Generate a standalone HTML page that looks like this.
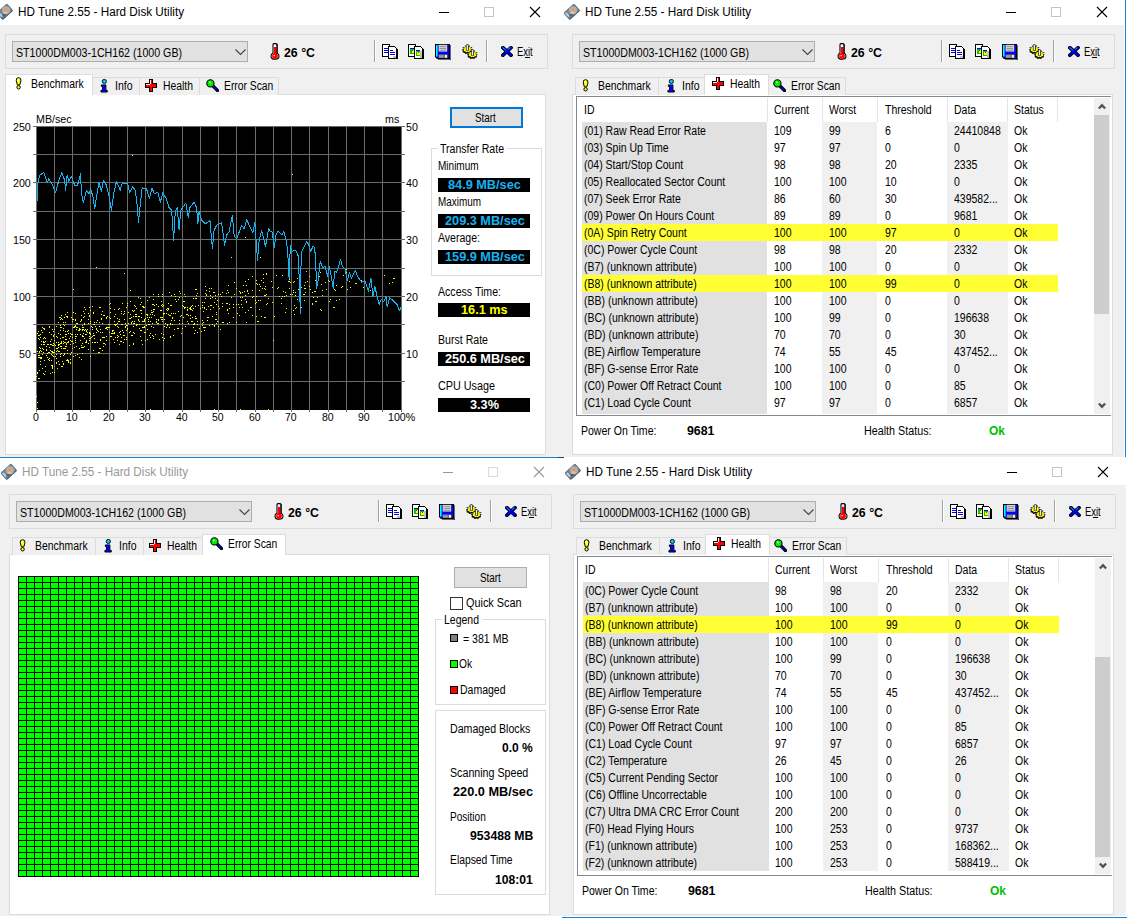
<!DOCTYPE html>
<html lang="en"><head><meta charset="utf-8"><title>HD Tune 2.55 - Hard Disk Utility</title>
<style>
html,body{margin:0;padding:0}
body{width:1127px;height:918px;position:relative;overflow:hidden;background:#f0f0f0;font-family:"Liberation Sans",sans-serif;color:#000}
.w{position:absolute;width:0;height:0}
.b{position:absolute;display:block}
.t{position:absolute;white-space:nowrap;transform-origin:0 50%}
</style></head>
<body>
<div class="b" style="left:0px;top:0px;width:1127px;height:25px;background:#fff;"></div>
<div class="b" style="left:0px;top:457px;width:1127px;height:28px;background:#fff;"></div>
<div class="b" style="left:0px;top:457px;width:558px;height:1px;background:#1883d7;"></div>
<div class="b" style="left:558px;top:457px;width:6px;height:1px;background:#3a3a3a;"></div>
<div class="b" style="left:1124px;top:25px;width:1px;height:432px;background:#fff;"></div>
<div class="b" style="left:1125px;top:0px;width:1px;height:457px;background:#1883d7;"></div>
<div class="b" style="left:1126px;top:0px;width:1px;height:918px;background:#fff;"></div>
<div class="b" style="left:0px;top:916px;width:1127px;height:2px;background:#fff;"></div>
<div class="b" style="left:562px;top:917px;width:565px;height:1px;background:#1883d7;"></div>
<div class="w" style="left:0px;top:0px">
<svg class="b" style="left:-2.9px;top:4.1px" width="16.2" height="16.2" viewBox="0 0 18 18"><g transform="rotate(-42 8.6 8.6)"><rect x="0.6" y="3.6" width="16" height="10.4" rx="1.6" fill="#3f566c"/><rect x="0.9" y="3.3" width="15.4" height="9.6" rx="1.5" fill="#6d8599"/><rect x="1.6" y="5" width="2.4" height="5.6" rx="1" fill="#c3ccd4"/><rect x="4.2" y="9.4" width="4.2" height="2.6" fill="#4c5f70"/></g><circle cx="10" cy="6.9" r="4.5" fill="#c4a994"/><ellipse cx="9.4" cy="9.6" rx="2.4" ry="1.3" fill="#e3c0a6"/><circle cx="9.9" cy="6.6" r="1.1" fill="#b39c8b"/></svg>
<div class="t" style="left:18.00px;top:4px;font-size:12px;line-height:16px;transform:scaleX(0.9762);">HD Tune 2.55 - Hard Disk Utility</div>
<div class="b" style="left:439px;top:12px;width:10px;height:1px;background:#000;"></div>
<div class="b" style="left:484px;top:7px;width:10px;height:10px;border:1px solid #c4c4c4;box-sizing:border-box;"></div>
<svg class="b" style="left:529px;top:6px" width="12" height="12" viewBox="0 0 12 12"><path d="M1 1 L11 11 M11 1 L1 11" stroke="#000" stroke-width="1.1"/></svg>
<div class="b" style="left:5px;top:34px;width:543px;height:35px;border:1px solid #dcdcdc;box-sizing:border-box;"></div>
<div class="b" style="left:12px;top:41px;width:236px;height:21px;background:#e1e1e1;border:1px solid #adadad;box-sizing:border-box;"></div>
<div class="t" style="left:16.00px;top:45px;font-size:12px;line-height:16px;transform:scaleX(0.8857);">ST1000DM003-1CH162 (1000 GB)</div>
<svg class="b" style="left:235px;top:48.5px" width="11" height="7" viewBox="0 0 11 7"><path d="M0.5 0.5 L5.5 5.5 L10.5 0.5" fill="none" stroke="#404040" stroke-width="1.1"/></svg>
<svg class="b" style="left:270px;top:43px" width="10" height="17" viewBox="0 0 10 17"><path d="M3 1.5 Q3 0.6 4.5 0.6 L5.5 0.6 Q7 0.6 7 1.5 L7 10 Q9 11 9 13 Q9 16.3 5 16.3 Q1 16.3 1 13 Q1 11 3 10 Z" fill="#fff" stroke="#000" stroke-width="1.1"/><rect x="4" y="4" width="2.6" height="8" fill="#f00"/><circle cx="5" cy="13" r="2.9" fill="#f00"/><rect x="3.6" y="12" width="1.2" height="1.2" fill="#fff"/><rect x="6.6" y="1" width="1" height="10" fill="#000"/></svg>
<div class="t" style="left:284.40px;top:44px;font-size:13px;line-height:17px;font-weight:bold;transform:scaleX(0.9492);">26 °C</div>
<div class="b" style="left:374px;top:40px;width:1px;height:22px;background:#a0a0a0;"></div>
<div class="b" style="left:375px;top:40px;width:1px;height:22px;background:#fff;"></div>
<svg class="b" style="left:382px;top:44px" width="16" height="16" viewBox="0 0 16 16" shape-rendering="crispEdges"><rect x="0.5" y="0.5" width="7" height="12" fill="#fff" stroke="#000"/><rect x="2" y="4" width="4" height="1" fill="#00f"/><rect x="2" y="6" width="4" height="1" fill="#00f"/><rect x="2" y="8" width="4" height="1" fill="#00f"/><rect x="8" y="14" width="8" height="1" fill="#000"/><rect x="15" y="5" width="1" height="10" fill="#000"/><polygon points="6.5,2.5 12.5,2.5 14.5,4.5 14.5,14.5 6.5,14.5" fill="#fff" stroke="#000"/><rect x="8" y="6" width="3" height="1" fill="#00f"/><rect x="8" y="8" width="5" height="1" fill="#00f"/><rect x="8" y="10" width="5" height="1" fill="#00f"/><rect x="11" y="12" width="3" height="2" fill="#c0c0c0"/></svg>
<svg class="b" style="left:408px;top:44px" width="16" height="16" viewBox="0 0 16 16" shape-rendering="crispEdges"><rect x="0.5" y="0.5" width="7" height="12" fill="#fff" stroke="#000"/><rect x="2" y="4" width="4" height="1" fill="#00f"/><rect x="2" y="5" width="4" height="5" fill="#0c0"/><rect x="4" y="6" width="2" height="3" fill="#ff0"/><rect x="4" y="6" width="1" height="1" fill="#f00"/><rect x="8" y="14" width="8" height="1" fill="#000"/><rect x="15" y="5" width="1" height="10" fill="#000"/><polygon points="6.5,2.5 12.5,2.5 14.5,4.5 14.5,14.5 6.5,14.5" fill="#fff" stroke="#000"/><rect x="8" y="6" width="4" height="1" fill="#00f"/><rect x="8" y="7" width="4" height="5" fill="#0c0"/><rect x="9" y="8" width="3" height="3" fill="#ff0"/><rect x="10" y="8" width="1" height="1" fill="#f00"/><rect x="12" y="7" width="2" height="7" fill="#c0c0c0"/></svg>
<svg class="b" style="left:435px;top:44px" width="16" height="16" viewBox="0 0 16 16"><path d="M0 0 H15 V15 H2 L0 13 Z" fill="#000"/><path d="M1 1 H14 V14 H2.4 L1 12.6 Z" fill="#0000ff"/><rect x="1" y="1" width="1.6" height="11.5" fill="#00ffff"/><rect x="3.6" y="0.8" width="8.6" height="6.8" fill="#d6d6d6"/><rect x="4.6" y="2.2" width="6.6" height="0.9" fill="#8c8c8c"/><rect x="4.6" y="4" width="6.6" height="0.9" fill="#8c8c8c"/><rect x="4.6" y="5.8" width="6.6" height="0.9" fill="#8c8c8c"/><rect x="3.6" y="10.4" width="9" height="3.6" fill="#6e6e6e"/><rect x="4" y="11.2" width="4.6" height="2.4" fill="#9a9a9a"/><rect x="10" y="11" width="1.9" height="2.8" fill="#f4f4f4"/><rect x="15" y="1" width="1" height="15" fill="#000" opacity="0.55"/><rect x="3" y="15" width="13" height="1" fill="#000" opacity="0.55"/></svg>
<svg class="b" style="left:462px;top:44px" width="17" height="17" viewBox="0 0 17 17"><polygon points="5.20,2.30 6.70,3.29 8.67,3.24 9.01,4.70 10.52,5.61 9.53,6.86 9.88,8.30 8.03,8.75 7.05,10.06 5.20,9.50 3.35,10.06 2.37,8.75 0.52,8.30 0.87,6.86 -0.12,5.61 1.39,4.70 1.73,3.24 3.70,3.29" fill="#000"/><polygon points="5.40,2.10 6.53,3.24 8.42,2.87 8.26,4.25 10.03,4.83 8.65,5.80 9.47,7.05 7.52,7.16 7.01,8.50 5.40,7.70 3.79,8.50 3.28,7.16 1.33,7.05 2.15,5.80 0.77,4.83 2.54,4.25 2.38,2.87 4.27,3.24" fill="#ffff00"/><rect x="0.66" y="3.10" width="1" height="1" fill="#000"/><rect x="2.83" y="1.64" width="1" height="1" fill="#000"/><rect x="6.97" y="1.64" width="1" height="1" fill="#000"/><rect x="9.14" y="3.10" width="1" height="1" fill="#000"/><path d="M4.30 1.20 l1.1 -1.2 l1.1 1.2 v5.2 h-2.2 z" fill="#c8c8d4" stroke="#000" stroke-width="0.7"/><rect x="4.80" y="1.40" width="0.8" height="5" fill="#fff"/><polygon points="10.30,7.30 11.80,8.29 13.77,8.24 14.11,9.70 15.62,10.61 14.63,11.86 14.98,13.30 13.13,13.75 12.15,15.06 10.30,14.50 8.45,15.06 7.47,13.75 5.62,13.30 5.97,11.86 4.98,10.61 6.49,9.70 6.83,8.24 8.80,8.29" fill="#000"/><polygon points="10.50,7.10 11.63,8.24 13.52,7.87 13.36,9.25 15.13,9.83 13.75,10.80 14.57,12.05 12.62,12.16 12.11,13.50 10.50,12.70 8.89,13.50 8.38,12.16 6.43,12.05 7.25,10.80 5.87,9.83 7.64,9.25 7.48,7.87 9.37,8.24" fill="#ffff00"/><rect x="5.76" y="8.10" width="1" height="1" fill="#000"/><rect x="7.93" y="6.64" width="1" height="1" fill="#000"/><rect x="12.07" y="6.64" width="1" height="1" fill="#000"/><rect x="14.24" y="8.10" width="1" height="1" fill="#000"/><path d="M9.40 6.20 l1.1 -1.2 l1.1 1.2 v5.2 h-2.2 z" fill="#c8c8d4" stroke="#000" stroke-width="0.7"/><rect x="9.90" y="6.40" width="0.8" height="5" fill="#fff"/></svg>
<div class="b" style="left:486px;top:40px;width:1px;height:22px;background:#a0a0a0;"></div>
<div class="b" style="left:487px;top:40px;width:1px;height:22px;background:#fff;"></div>
<svg class="b" style="left:500.5px;top:45.5px" width="12.2" height="11.3" viewBox="0 0 13 12"><path d="M2 1.8 L10.6 9.8 M10.6 1.8 L2 9.8" stroke="#000" stroke-width="3.9" stroke-linecap="square"/><path d="M2 1.8 L10.6 9.8 M10.6 1.8 L2 9.8" stroke="#0000ff" stroke-width="2" stroke-linecap="square"/><path d="M1.7 1.4 L5.2 4.7 M10 1.4 L7.6 3.7" stroke="#00e5ff" stroke-width="0.9"/></svg>
<div class="t" style="left:517.30px;top:44px;font-size:12px;line-height:16px;transform:scaleX(0.7848);">Exit</div>
<div class="b" style="left:525px;top:57px;width:5px;height:1px;background:#000;"></div>
<div class="b" style="left:5px;top:94px;width:541px;height:361px;background:#fff;border:1px solid #dcdcdc;box-sizing:border-box;"></div>
<div class="b" style="left:90.5px;top:77px;width:49px;height:18px;background:#f0f0f0;border:1px solid #dcdcdc;box-sizing:border-box;border-bottom:none;"></div>
<svg class="b" style="left:99.6px;top:79px" width="8.2" height="13.6" viewBox="0 0 9 15"><circle cx="4.8" cy="2.7" r="2.3" fill="#0cf" stroke="#000" stroke-width="1"/><path d="M1.5 6.5 L6.5 6.5 L6.5 12.5 L8 12.5 L8 14.4 L1 14.4 L1 12.5 L2.8 12.5 L2.8 8.3 L1.5 8.3 Z" fill="#00f" stroke="#000" stroke-width="1"/></svg>
<div class="t" style="left:114.50px;top:78px;font-size:12px;line-height:16px;transform:scaleX(0.8743);">Info</div>
<div class="b" style="left:138.5px;top:77px;width:61.5px;height:18px;background:#f0f0f0;border:1px solid #dcdcdc;box-sizing:border-box;border-bottom:none;"></div>
<svg class="b" style="left:145px;top:79px" width="12" height="13" viewBox="0 0 12 13" shape-rendering="crispEdges"><path d="M4.5 0.5 H7.5 V4.5 H11.5 V8.5 H7.5 V12.5 H4.5 V8.5 H0.5 V4.5 H4.5 Z" fill="#f00" stroke="#000" stroke-width="1"/><rect x="5" y="1" width="1" height="4" fill="#fff"/><rect x="1" y="5" width="4" height="1" fill="#fff"/></svg>
<div class="t" style="left:163.30px;top:78px;font-size:12px;line-height:16px;transform:scaleX(0.8649);">Health</div>
<div class="b" style="left:199px;top:77px;width:79.5px;height:18px;background:#f0f0f0;border:1px solid #dcdcdc;box-sizing:border-box;border-bottom:none;"></div>
<svg class="b" style="left:205.5px;top:78.5px" width="13" height="13" viewBox="0 0 13 13"><path d="M6.5 6.5 L11.5 11.5" stroke="#000" stroke-width="3.2" stroke-linecap="round"/><path d="M7 7 L11.3 11.3" stroke="#00c" stroke-width="1.3" stroke-linecap="round"/><circle cx="4.4" cy="4.4" r="3.6" fill="#0e0" stroke="#000" stroke-width="1.1"/><rect x="3" y="2.6" width="1.6" height="1.6" fill="#cfc"/></svg>
<div class="t" style="left:224.20px;top:78px;font-size:12px;line-height:16px;transform:scaleX(0.8596);">Error Scan</div>
<div class="b" style="left:5px;top:74px;width:88px;height:21px;background:#fff;border:1px solid #dcdcdc;box-sizing:border-box;border-bottom:none;"></div>
<svg class="b" style="left:15.1px;top:77px" width="7.2" height="12.8" viewBox="0 0 8 14"><path d="M4 0.6 Q7 0.6 6.6 4 L5.4 8.6 L2.6 8.6 L1.4 4 Q1 0.6 4 0.6 Z" fill="#ff0" stroke="#000" stroke-width="1.1"/><circle cx="4" cy="11.3" r="1.9" fill="#ff0" stroke="#000" stroke-width="1.1"/><rect x="3" y="2" width="1" height="3" fill="#fff"/></svg>
<div class="t" style="left:31.30px;top:76px;font-size:12px;line-height:16px;transform:scaleX(0.8667);">Benchmark</div>
<svg class="b" style="left:0;top:0" width="560" height="440" viewBox="0 0 560 440"><rect x="36" y="126" width="366" height="284" fill="#000"/><path d="M36.5 126 V412 M54.5 126 V412 M72.5 126 V412 M90.5 126 V412 M109.5 126 V412 M127.5 126 V412 M145.5 126 V412 M163.5 126 V412 M182.5 126 V412 M200.5 126 V412 M218.5 126 V412 M236.5 126 V412 M255.5 126 V412 M273.5 126 V412 M291.5 126 V412 M309.5 126 V412 M328.5 126 V412 M346.5 126 V412 M364.5 126 V412 M382.5 126 V412 M401.5 126 V412 M33 126.5 H405 M33 154.5 H405 M33 182.5 H405 M33 211.5 H405 M33 239.5 H405 M33 268.5 H405 M33 296.5 H405 M33 324.5 H405 M33 353.5 H405 M33 381.5 H405" stroke="#6c6c6c" stroke-width="1" fill="none" shape-rendering="crispEdges"/><path d="M53 356.5h1M58 347.5h1M40 350.5h1M38 378.5h1M60 330.5h1M44 337.5h1M68 342.5h1M54 372.5h1M63 328.5h1M65 346.5h2M68 341.5h1M73 327.5h1M47 357.5h1M41 330.5h1M43 341.5h1M42 332.5h1M45 371.5h1M70 344.5h1M40 337.5h1M65 322.5h1M58 342.5h1M72 348.5h1M42 368.5h1M44 374.5h1M72 341.5h1M41 358.5h1M46 355.5h1M43 328.5h1M57 350.5h1M71 317.5h1M39 352.5h1M50 373.5h1M62 319.5h1M70 362.5h1M60 343.5h2M39 370.5h1M63 363.5h1M62 361.5h1M66 343.5h1M51 339.5h1M74 347.5h1M64 348.5h1M65 342.5h1M63 355.5h1M37 351.5h1M70 333.5h1M49 332.5h1M67 359.5h1M58 333.5h1M68 362.5h1M43 338.5h1M60 346.5h2M53 343.5h1M63 343.5h1M42 348.5h1M42 354.5h1M61 366.5h1M44 329.5h1M63 330.5h1M56 358.5h1M66 316.5h2M64 342.5h1M51 365.5h2M54 329.5h1M67 350.5h1M70 363.5h1M66 360.5h1M40 361.5h1M38 331.5h1M43 349.5h1M56 363.5h1M72 337.5h1M56 354.5h1M68 330.5h1M70 359.5h1M58 344.5h1M38 355.5h1M66 344.5h1M57 368.5h1M54 352.5h1M54 340.5h1M42 327.5h1M45 341.5h1M60 338.5h1M46 349.5h1M52 329.5h1M60 354.5h1M45 366.5h1M48 352.5h2M70 336.5h1M40 348.5h1M41 344.5h1M62 366.5h1M55 345.5h1M44 328.5h1M56 326.5h1M68 361.5h1M39 351.5h1M49 347.5h1M37 372.5h1M54 340.5h1M43 349.5h1M63 348.5h1M59 364.5h1M71 352.5h1M52 367.5h1M65 334.5h1M39 339.5h1M60 327.5h2M61 348.5h1M51 354.5h1M65 314.5h1M64 325.5h1M51 351.5h1M56 348.5h2M60 319.5h1M65 342.5h1M43 342.5h2M52 345.5h1M61 342.5h1M37 333.5h1M51 360.5h1M73 312.5h1M53 352.5h1M71 334.5h2M67 317.5h1M54 334.5h1M53 343.5h1M58 351.5h2M72 321.5h1M70 344.5h1M47 353.5h1M60 325.5h1M73 356.5h1M39 355.5h1M57 337.5h1M60 334.5h1M64 317.5h1M67 353.5h1M52 351.5h1M73 343.5h1M53 345.5h1M40 357.5h1M65 336.5h1M48 359.5h1M42 354.5h1M63 364.5h1M53 335.5h1M52 368.5h1M50 341.5h1M44 360.5h1M58 361.5h1M38 357.5h2M61 318.5h1M66 334.5h1M40 334.5h1M61 341.5h1M65 348.5h1M55 356.5h1M52 355.5h1M67 360.5h2M60 356.5h1M52 366.5h1M43 344.5h2M39 347.5h1M43 352.5h1M38 338.5h1M63 324.5h1M43 341.5h1M67 342.5h1M49 360.5h1M39 370.5h1M56 351.5h1M46 346.5h1M63 322.5h1M49 358.5h1M74 326.5h1M37 373.5h1M40 348.5h1M54 350.5h1M48 344.5h1M40 337.5h1M56 348.5h1M40 358.5h1M62 337.5h2M67 312.5h1M63 341.5h1M73 319.5h1M47 344.5h1M51 334.5h1M64 354.5h1M49 326.5h1M40 364.5h1M52 352.5h1M45 338.5h1M71 341.5h1M67 331.5h1M52 372.5h1M61 315.5h1M49 327.5h1M56 362.5h1M43 373.5h1M50 344.5h2M56 362.5h1M72 319.5h1M46 350.5h1M50 350.5h1M70 340.5h1M70 354.5h1M41 341.5h1M46 350.5h1M40 357.5h2M61 353.5h1M59 317.5h1M54 344.5h1M56 342.5h1M38 335.5h2M59 344.5h1M65 339.5h2M68 333.5h1M58 345.5h1M53 336.5h1M64 353.5h1M65 331.5h1M53 331.5h1M56 336.5h1M39 378.5h1M69 338.5h1M58 322.5h1M41 351.5h1M86 331.5h1M90 321.5h1M110 336.5h2M93 335.5h1M82 325.5h1M81 359.5h1M99 326.5h1M103 346.5h1M79 357.5h1M77 334.5h1M81 345.5h1M100 332.5h1M86 340.5h1M100 339.5h1M95 326.5h1M106 327.5h1M85 334.5h2M75 338.5h1M94 335.5h1M100 329.5h1M108 327.5h2M81 315.5h1M83 347.5h1M83 327.5h1M75 342.5h1M81 320.5h1M92 327.5h1M97 330.5h1M86 330.5h1M84 330.5h1M84 346.5h1M76 323.5h2M75 355.5h1M92 306.5h1M110 318.5h1M77 354.5h1M83 327.5h1M111 333.5h1M75 326.5h1M102 332.5h1M92 336.5h1M82 325.5h1M82 327.5h1M114 342.5h1M89 332.5h1M75 325.5h1M103 315.5h2M88 343.5h1M75 320.5h1M87 332.5h1M90 310.5h1M75 334.5h1M102 337.5h1M82 336.5h1M109 317.5h1M75 340.5h1M113 339.5h1M102 350.5h1M83 311.5h1M90 323.5h1M85 329.5h1M101 314.5h1M80 340.5h1M75 319.5h1M76 336.5h1M84 338.5h1M84 316.5h1M99 322.5h1M112 331.5h1M90 333.5h1M89 307.5h1M94 338.5h1M82 330.5h1M96 322.5h1M96 332.5h1M113 330.5h1M103 337.5h2M107 329.5h1M89 338.5h1M84 324.5h1M76 329.5h1M92 329.5h1M109 304.5h1M94 324.5h1M84 323.5h1M104 343.5h1M91 337.5h1M106 328.5h1M81 347.5h2M79 329.5h1M90 356.5h1M102 311.5h1M114 309.5h1M93 333.5h1M85 342.5h2M89 333.5h1M80 334.5h1M93 313.5h1M80 321.5h1M93 312.5h1M110 308.5h1M114 333.5h1M106 317.5h1M99 348.5h2M92 342.5h1M75 313.5h1M104 315.5h1M112 333.5h1M103 343.5h1M113 333.5h1M84 307.5h1M83 333.5h1M88 323.5h1M110 312.5h1M82 335.5h1M81 319.5h1M74 327.5h1M112 330.5h1M78 330.5h2M83 329.5h1M101 319.5h1M88 313.5h1M89 316.5h1M109 332.5h1M97 342.5h1M101 318.5h1M97 320.5h1M98 331.5h1M114 316.5h1M114 324.5h2M94 342.5h2M107 327.5h2M76 346.5h1M106 336.5h1M85 309.5h1M105 328.5h1M105 344.5h1M89 315.5h1M107 316.5h1M99 307.5h2M82 353.5h1M82 329.5h1M87 329.5h1M102 323.5h1M79 348.5h1M82 343.5h1M88 319.5h1M91 326.5h1M94 322.5h1M83 336.5h1M108 324.5h2M89 336.5h1M76 327.5h2M86 341.5h1M90 334.5h1M88 349.5h1M96 329.5h1M89 340.5h1M110 303.5h1M93 324.5h1M98 352.5h2M90 338.5h1M114 321.5h1M83 317.5h1M80 329.5h1M100 340.5h1M106 340.5h1M93 350.5h1M75 336.5h1M106 318.5h1M79 328.5h1M84 313.5h1M96 328.5h1M80 334.5h1M98 352.5h1M115 337.5h1M122 303.5h1M163 334.5h1M135 306.5h1M131 335.5h2M143 327.5h1M152 314.5h1M132 310.5h1M117 323.5h1M119 319.5h1M152 304.5h2M114 332.5h1M133 326.5h1M139 316.5h1M127 328.5h1M135 316.5h2M156 321.5h1M147 315.5h1M142 327.5h1M162 321.5h1M152 335.5h1M118 321.5h1M133 311.5h1M151 317.5h1M142 306.5h2M143 306.5h1M141 302.5h1M138 316.5h1M161 319.5h1M119 308.5h1M124 311.5h1M141 330.5h1M144 327.5h1M126 330.5h1M117 318.5h1M136 324.5h2M160 310.5h1M119 321.5h1M143 307.5h2M153 299.5h1M125 326.5h1M153 338.5h1M133 332.5h1M158 306.5h1M115 314.5h1M121 313.5h1M140 304.5h1M158 320.5h1M141 340.5h1M127 329.5h1M126 325.5h2M140 310.5h2M120 331.5h1M160 310.5h2M130 301.5h1M117 337.5h1M158 319.5h1M141 317.5h1M124 319.5h1M118 336.5h1M121 324.5h2M164 338.5h1M162 319.5h1M145 340.5h1M140 298.5h1M158 294.5h1M156 319.5h1M153 294.5h1M155 334.5h1M131 317.5h1M144 320.5h1M126 307.5h1M127 325.5h1M147 314.5h1M123 314.5h1M148 321.5h1M153 309.5h2M133 343.5h1M121 337.5h1M154 315.5h1M138 297.5h1M133 323.5h1M159 339.5h1M161 333.5h1M121 341.5h1M162 304.5h1M162 306.5h1M130 314.5h1M143 321.5h2M118 309.5h1M161 305.5h1M129 345.5h1M145 318.5h1M162 294.5h1M134 305.5h1M125 323.5h1M147 300.5h1M116 324.5h1M146 325.5h1M135 316.5h1M126 339.5h1M122 330.5h1M151 312.5h2M128 323.5h1M139 321.5h1M114 321.5h1M138 320.5h1M163 305.5h1M126 337.5h1M160 317.5h2M139 324.5h1M131 323.5h1M164 326.5h1M150 333.5h1M156 322.5h1M140 330.5h1M162 296.5h1M120 341.5h1M123 335.5h2M146 314.5h1M153 336.5h1M162 317.5h1M132 321.5h1M147 329.5h1M130 318.5h1M162 337.5h1M163 340.5h1M131 322.5h1M158 323.5h1M124 313.5h1M117 335.5h1M135 314.5h2M120 334.5h1M147 339.5h1M142 321.5h1M153 311.5h1M151 310.5h1M147 317.5h1M119 344.5h1M118 327.5h1M136 325.5h1M149 297.5h1M121 311.5h1M134 323.5h1M139 328.5h1M130 331.5h1M134 310.5h1M150 314.5h1M130 318.5h1M153 327.5h1M133 344.5h1M134 333.5h1M151 326.5h1M136 308.5h1M141 313.5h1M115 325.5h1M125 327.5h1M117 340.5h1M144 332.5h1M144 326.5h1M164 319.5h1M162 319.5h1M123 342.5h1M129 318.5h1M145 332.5h1M163 313.5h1M149 335.5h1M128 312.5h1M148 324.5h2M127 303.5h1M152 323.5h1M156 304.5h1M150 321.5h1M130 331.5h1M164 313.5h1M163 314.5h1M161 301.5h1M150 337.5h1M133 316.5h1M117 326.5h1M119 332.5h1M158 296.5h1M123 332.5h1M138 319.5h1M127 305.5h1M144 319.5h1M140 336.5h1M148 319.5h1M134 321.5h1M154 305.5h1M129 332.5h1M124 339.5h1M149 317.5h1M142 344.5h1M157 323.5h1M191 321.5h2M169 292.5h1M184 294.5h1M212 316.5h1M174 329.5h1M187 310.5h1M166 313.5h1M203 322.5h1M197 324.5h1M168 314.5h1M166 327.5h1M178 299.5h1M196 289.5h1M184 301.5h1M174 320.5h1M211 288.5h1M177 328.5h2M198 305.5h1M190 309.5h1M167 325.5h1M172 317.5h1M190 315.5h1M174 294.5h1M167 324.5h1M202 320.5h1M206 290.5h1M209 288.5h1M195 289.5h1M179 297.5h1M173 313.5h1M193 308.5h1M196 295.5h1M194 323.5h1M184 307.5h1M210 298.5h1M204 330.5h1M185 326.5h1M214 325.5h1M195 330.5h1M209 325.5h1M213 307.5h1M204 307.5h1M195 318.5h2M178 311.5h1M175 299.5h1M165 323.5h1M168 303.5h1M201 331.5h1M181 315.5h1M199 328.5h1M196 298.5h1M202 325.5h1M170 323.5h1M192 305.5h1M197 293.5h1M168 309.5h1M182 323.5h1M193 324.5h2M179 320.5h1M166 313.5h1M191 306.5h1M215 298.5h1M190 307.5h1M189 308.5h2M167 310.5h1M172 324.5h1M180 316.5h1M209 291.5h1M202 307.5h1M195 318.5h1M204 302.5h1M210 295.5h1M195 316.5h1M197 332.5h1M181 333.5h1M167 308.5h2M208 306.5h1M202 302.5h1M200 308.5h1M170 324.5h1M183 317.5h1M171 320.5h1M203 327.5h2M185 307.5h1M183 306.5h1M207 317.5h1M184 301.5h1M170 336.5h1M184 308.5h1M169 315.5h1M183 301.5h1M179 291.5h1M205 293.5h1M205 286.5h1M195 298.5h1M214 326.5h1M171 295.5h1M170 305.5h2M194 333.5h1M197 321.5h1M192 317.5h1M193 327.5h1M172 318.5h1M187 309.5h1M182 328.5h1M192 310.5h1M203 311.5h1M175 313.5h1M172 318.5h1M214 302.5h1M206 294.5h1M206 295.5h1M173 335.5h1M171 313.5h1M204 308.5h1M188 323.5h1M193 298.5h1M167 325.5h1M167 308.5h1M195 306.5h1M170 315.5h1M205 298.5h1M202 305.5h1M205 327.5h1M213 292.5h2M175 296.5h1M187 321.5h1M210 309.5h1M179 323.5h1M206 309.5h1M176 301.5h1M185 296.5h1M182 305.5h1M180 293.5h1M166 309.5h1M191 309.5h1M190 318.5h1M207 320.5h1M188 315.5h1M208 317.5h1M210 305.5h2M173 313.5h1M202 307.5h1M202 323.5h1M169 327.5h1M212 297.5h1M170 337.5h1M187 307.5h1M186 314.5h2M212 324.5h1M227 310.5h1M266 273.5h1M252 276.5h1M227 323.5h1M220 329.5h1M239 315.5h1M229 304.5h1M222 292.5h1M264 317.5h1M258 300.5h1M252 315.5h1M218 306.5h1M266 304.5h1M234 282.5h1M252 297.5h1M238 304.5h1M215 295.5h1M236 322.5h1M216 312.5h1M246 285.5h1M218 326.5h1M246 322.5h1M265 286.5h1M259 290.5h1M257 321.5h1M258 321.5h1M261 280.5h1M266 294.5h1M231 297.5h1M256 302.5h1M227 309.5h1M240 297.5h1M233 317.5h1M245 312.5h1M222 322.5h2M255 303.5h1M222 306.5h1M265 289.5h1M226 303.5h1M261 316.5h1M228 285.5h1M219 308.5h1M242 297.5h1M257 284.5h1M217 321.5h1M252 290.5h1M245 295.5h1M260 300.5h1M215 319.5h2M245 281.5h1M247 290.5h1M226 293.5h1M234 294.5h1M242 292.5h1M218 294.5h1M257 284.5h1M264 317.5h1M218 306.5h1M217 300.5h1M233 304.5h1M220 294.5h1M228 292.5h1M255 300.5h1M263 282.5h1M240 293.5h1M236 304.5h1M260 300.5h1M263 274.5h1M256 296.5h1M248 293.5h1M256 280.5h1M222 303.5h1M256 316.5h1M256 283.5h1M239 291.5h1M259 309.5h1M262 288.5h1M264 288.5h1M239 307.5h1M259 284.5h1M244 291.5h1M221 296.5h1M246 302.5h1M229 308.5h1M247 291.5h1M263 278.5h1M236 288.5h1M216 323.5h1M216 304.5h1M253 296.5h1M228 313.5h1M233 307.5h1M248 279.5h1M227 303.5h1M229 322.5h1M265 317.5h1M245 299.5h1M248 310.5h1M216 314.5h1M241 304.5h1M243 285.5h1M260 286.5h1M241 300.5h1M227 290.5h1M242 307.5h1M240 292.5h1M250 307.5h2M246 301.5h1M237 313.5h1M264 295.5h2M306 271.5h1M312 304.5h1M313 297.5h1M309 286.5h1M293 292.5h1M299 293.5h1M312 303.5h1M321 310.5h1M307 281.5h1M322 290.5h1M317 297.5h1M283 291.5h1M297 278.5h1M293 282.5h1M296 307.5h1M329 281.5h1M294 281.5h1M283 291.5h1M303 294.5h2M314 291.5h1M318 273.5h1M320 272.5h1M286 308.5h1M304 300.5h1M290 294.5h1M279 296.5h1M272 287.5h1M281 298.5h1M330 299.5h1M277 288.5h1M271 281.5h1M295 308.5h1M294 305.5h1M282 275.5h1M298 289.5h2M294 314.5h1M315 280.5h1M325 282.5h1M289 288.5h1M299 292.5h1M282 296.5h1M316 282.5h1M285 292.5h1M276 275.5h1M274 316.5h1M267 303.5h1M315 291.5h1M281 303.5h1M278 287.5h1M295 295.5h1M292 294.5h1M329 301.5h1M301 287.5h1M305 292.5h1M285 312.5h1M286 295.5h1M315 301.5h2M295 292.5h1M293 290.5h1M284 296.5h1M328 280.5h1M322 295.5h1M319 276.5h1M272 302.5h1M309 276.5h1M304 288.5h2M312 292.5h1M301 307.5h1M326 289.5h1M321 284.5h1M289 279.5h1M268 298.5h1M305 282.5h1M288 281.5h2M310 289.5h1M290 282.5h1M272 287.5h1M293 310.5h1M320 309.5h1M304 285.5h1M266 274.5h1M297 299.5h1M355 283.5h2M347 289.5h1M339 299.5h1M342 286.5h1M355 270.5h1M337 270.5h1M358 278.5h1M335 290.5h1M349 281.5h1M361 280.5h1M333 307.5h2M350 287.5h1M336 285.5h1M332 286.5h1M341 287.5h1M345 269.5h2M363 287.5h1M334 289.5h1M343 275.5h1M346 272.5h1M336 300.5h1M359 278.5h1M393 278.5h1M392 282.5h1M370 290.5h1M384 275.5h1M394 278.5h1M389 283.5h1M96 267.5h1M124 273.5h1M73 289.5h1M130 290.5h1M231 257.5h1M132 155.5h1M60 317.5h1M273 340.5h1M245 237.5h1M260 257.5h1M292 174.5h1M36 396.5h1M37 402.5h1M37 408.5h1M36 376.5h1M150 409.5h1M214 409.5h1M268 409.5h1M240 409.5h1" stroke="#ffff00" stroke-width="1" fill="none" shape-rendering="crispEdges"/><polyline points="37.1,201.4 37.6,185.1 39.6,175.1 43.8,172.6 47.1,182.6 48.8,178.9 52.6,185.1 55.6,192.7 58.9,180.1 61.9,172.6 64.6,180.1 65.6,190.2 67.1,175.1 68.9,181.4 71.4,176.4 74.6,185.1 77.6,185.1 80.6,173.9 81.4,192.7 83.4,202.7 86.4,190.2 88.9,193.9 90.7,188.9 93.2,197.7 94.7,208.9 96.4,197.7 98.9,182.6 101.4,191.4 103.4,180.6 106.4,185.1 108.9,195.2 111.4,210.2 113.9,192.7 116.5,181.4 120.2,190.2 122.0,183.9 127.7,183.9 129.7,192.7 132.7,186.4 135.2,190.2 137.2,205.2 138.5,222.7 140.2,205.2 142.2,187.7 146.5,188.9 149.5,198.2 152.0,188.2 154.5,193.9 157.8,192.2 160.3,202.2 162.8,192.7 166.5,198.9 169.0,207.7 171.6,210.2 173.6,240.2 175.3,211.4 177.3,207.7 179.1,230.2 180.8,210.2 185.8,203.2 188.3,217.7 189.8,207.7 194.1,202.2 196.6,207.7 197.8,224.0 199.1,211.4 201.6,220.2 205.4,224.0 209.9,220.2 212.4,248.3 214.1,230.2 216.6,225.2 221.6,222.7 224.6,245.3 226.6,235.2 229.2,231.5 232.4,215.2 234.2,236.5 236.7,239.0 241.7,225.2 244.2,229.0 246.7,219.7 250.4,227.7 252.9,232.7 254.9,222.7 257.5,260.3 259.2,240.2 261.7,230.2 265.5,246.5 268.5,229.0 270.0,231.0 272.0,231.5 274.4,247.2 275.9,234.9 278.3,231.2 281.8,234.9 283.7,231.5 285.7,237.8 287.6,249.6 289.1,279.0 290.3,245.7 292.1,251.1 296.0,250.6 298.4,256.5 300.4,313.3 301.2,252.5 303.8,247.6 306.8,241.3 308.7,244.7 310.7,251.1 313.1,246.2 314.6,247.6 315.6,259.4 316.6,288.3 318.0,281.0 320.2,261.4 322.5,267.3 325.4,266.8 327.4,276.1 329.3,266.8 331.3,276.1 333.2,288.3 334.7,271.2 336.7,272.2 340.6,259.4 342.5,266.8 345.0,269.2 347.5,280.5 349.4,272.2 351.3,278.2 355.2,270.3 357.8,276.9 361.7,282.1 365.1,280.8 368.3,291.3 370.9,278.2 373.0,296.5 374.8,286.0 377.4,297.8 379.2,304.3 381.3,299.1 383.9,301.7 386.0,296.5 387.1,306.9 389.7,297.8 393.1,300.4 397.0,304.3 399.6,310.9 400.9,306.9" fill="none" stroke="#16b2f2" stroke-width="1" stroke-linejoin="round" shape-rendering="crispEdges"/></svg>
<div class="t" style="left:13.20px;top:120px;font-size:11px;line-height:15px;transform:scaleX(0.9700);">250</div>
<div class="t" style="left:13.20px;top:176px;font-size:11px;line-height:15px;transform:scaleX(0.9700);">200</div>
<div class="t" style="left:13.20px;top:233px;font-size:11px;line-height:15px;transform:scaleX(0.9700);">150</div>
<div class="t" style="left:13.20px;top:290px;font-size:11px;line-height:15px;transform:scaleX(0.9700);">100</div>
<div class="t" style="left:19.13px;top:347px;font-size:11px;line-height:15px;transform:scaleX(0.9700);">50</div>
<div class="t" style="left:406.00px;top:120px;font-size:11px;line-height:15px;transform:scaleX(0.9700);">50</div>
<div class="t" style="left:406.00px;top:176px;font-size:11px;line-height:15px;transform:scaleX(0.9700);">40</div>
<div class="t" style="left:406.00px;top:233px;font-size:11px;line-height:15px;transform:scaleX(0.9700);">30</div>
<div class="t" style="left:406.00px;top:290px;font-size:11px;line-height:15px;transform:scaleX(0.9700);">20</div>
<div class="t" style="left:406.00px;top:347px;font-size:11px;line-height:15px;transform:scaleX(0.9700);">10</div>
<div class="t" style="left:32.89px;top:410px;font-size:11px;line-height:15px;transform:scaleX(0.9500);">0</div>
<div class="t" style="left:66.49px;top:410px;font-size:11px;line-height:15px;transform:scaleX(0.9500);">10</div>
<div class="t" style="left:102.99px;top:410px;font-size:11px;line-height:15px;transform:scaleX(0.9500);">20</div>
<div class="t" style="left:139.49px;top:410px;font-size:11px;line-height:15px;transform:scaleX(0.9500);">30</div>
<div class="t" style="left:175.99px;top:410px;font-size:11px;line-height:15px;transform:scaleX(0.9500);">40</div>
<div class="t" style="left:212.49px;top:410px;font-size:11px;line-height:15px;transform:scaleX(0.9500);">50</div>
<div class="t" style="left:248.99px;top:410px;font-size:11px;line-height:15px;transform:scaleX(0.9500);">60</div>
<div class="t" style="left:285.49px;top:410px;font-size:11px;line-height:15px;transform:scaleX(0.9500);">70</div>
<div class="t" style="left:321.99px;top:410px;font-size:11px;line-height:15px;transform:scaleX(0.9500);">80</div>
<div class="t" style="left:358.49px;top:410px;font-size:11px;line-height:15px;transform:scaleX(0.9500);">90</div>
<div class="t" style="left:387.66px;top:410px;font-size:11px;line-height:15px;transform:scaleX(0.9700);">100%</div>
<div class="t" style="left:36.40px;top:112px;font-size:11px;line-height:15px;transform:scaleX(0.9700);">MB/sec</div>
<div class="t" style="left:385.28px;top:112px;font-size:11px;line-height:15px;transform:scaleX(0.9700);">ms</div>
<div class="b" style="left:450px;top:107px;width:73px;height:21px;background:#e1e1e1;border:2px solid #0078d7;box-sizing:border-box;"></div>
<div class="t" style="left:475.20px;top:110px;font-size:12px;line-height:16px;transform:scaleX(0.8208);">Start</div>
<div class="b" style="left:431px;top:148px;width:111px;height:128px;border:1px solid #dcdcdc;box-sizing:border-box;"></div>
<div class="b" style="left:438px;top:140px;width:69px;height:16px;background:#fff;"></div>
<div class="t" style="left:440.30px;top:141px;font-size:12px;line-height:16px;transform:scaleX(0.8777);">Transfer Rate</div>
<div class="t" style="left:437.60px;top:158px;font-size:12px;line-height:16px;transform:scaleX(0.8342);">Minimum</div><div class="b" style="left:438px;top:178px;width:92px;height:14px;background:#000;"></div><div class="t" style="left:448.30px;top:176px;font-size:13px;line-height:17px;font-weight:bold;color:#18b2f2;transform:scaleX(0.9780);">84.9 MB/sec</div>
<div class="t" style="left:437.60px;top:194px;font-size:12px;line-height:16px;transform:scaleX(0.8269);">Maximum</div><div class="b" style="left:438px;top:214px;width:92px;height:14px;background:#000;"></div><div class="t" style="left:444.77px;top:212px;font-size:13px;line-height:17px;font-weight:bold;color:#18b2f2;transform:scaleX(0.9780);">209.3 MB/sec</div>
<div class="t" style="left:437.60px;top:230px;font-size:12px;line-height:16px;transform:scaleX(0.8784);">Average:</div><div class="b" style="left:438px;top:250px;width:92px;height:14px;background:#000;"></div><div class="t" style="left:444.77px;top:248px;font-size:13px;line-height:17px;font-weight:bold;color:#18b2f2;transform:scaleX(0.9780);">159.9 MB/sec</div>
<div class="t" style="left:437.60px;top:284px;font-size:12px;line-height:16px;transform:scaleX(0.8830);">Access Time:</div><div class="b" style="left:438px;top:303px;width:92px;height:14px;background:#000;"></div><div class="t" style="left:461.37px;top:301px;font-size:13px;line-height:17px;font-weight:bold;color:#ffff00;transform:scaleX(0.9780);">16.1 ms</div>
<div class="t" style="left:437.60px;top:332px;font-size:12px;line-height:16px;transform:scaleX(0.8820);">Burst Rate</div><div class="b" style="left:438px;top:352px;width:92px;height:14px;background:#000;"></div><div class="t" style="left:444.77px;top:350px;font-size:13px;line-height:17px;font-weight:bold;color:#fff;transform:scaleX(0.9780);">250.6 MB/sec</div>
<div class="t" style="left:437.60px;top:378px;font-size:12px;line-height:16px;transform:scaleX(0.8997);">CPU Usage</div><div class="b" style="left:438px;top:398px;width:92px;height:14px;background:#000;"></div><div class="t" style="left:470.21px;top:396px;font-size:13px;line-height:17px;font-weight:bold;color:#fff;transform:scaleX(0.9780);">3.3%</div>
</div>
<div class="w" style="left:567px;top:0px">
<svg class="b" style="left:-2.9px;top:4.1px" width="16.2" height="16.2" viewBox="0 0 18 18"><g transform="rotate(-42 8.6 8.6)"><rect x="0.6" y="3.6" width="16" height="10.4" rx="1.6" fill="#3f566c"/><rect x="0.9" y="3.3" width="15.4" height="9.6" rx="1.5" fill="#6d8599"/><rect x="1.6" y="5" width="2.4" height="5.6" rx="1" fill="#c3ccd4"/><rect x="4.2" y="9.4" width="4.2" height="2.6" fill="#4c5f70"/></g><circle cx="10" cy="6.9" r="4.5" fill="#c4a994"/><ellipse cx="9.4" cy="9.6" rx="2.4" ry="1.3" fill="#e3c0a6"/><circle cx="9.9" cy="6.6" r="1.1" fill="#b39c8b"/></svg>
<div class="t" style="left:18.00px;top:4px;font-size:12px;line-height:16px;transform:scaleX(0.9762);">HD Tune 2.55 - Hard Disk Utility</div>
<div class="b" style="left:439px;top:12px;width:10px;height:1px;background:#000;"></div>
<div class="b" style="left:484px;top:7px;width:10px;height:10px;border:1px solid #c4c4c4;box-sizing:border-box;"></div>
<svg class="b" style="left:529px;top:6px" width="12" height="12" viewBox="0 0 12 12"><path d="M1 1 L11 11 M11 1 L1 11" stroke="#000" stroke-width="1.1"/></svg>
<div class="b" style="left:5px;top:34px;width:543px;height:35px;border:1px solid #dcdcdc;box-sizing:border-box;"></div>
<div class="b" style="left:12px;top:41px;width:236px;height:21px;background:#e1e1e1;border:1px solid #adadad;box-sizing:border-box;"></div>
<div class="t" style="left:16.00px;top:45px;font-size:12px;line-height:16px;transform:scaleX(0.8857);">ST1000DM003-1CH162 (1000 GB)</div>
<svg class="b" style="left:235px;top:48.5px" width="11" height="7" viewBox="0 0 11 7"><path d="M0.5 0.5 L5.5 5.5 L10.5 0.5" fill="none" stroke="#404040" stroke-width="1.1"/></svg>
<svg class="b" style="left:270px;top:43px" width="10" height="17" viewBox="0 0 10 17"><path d="M3 1.5 Q3 0.6 4.5 0.6 L5.5 0.6 Q7 0.6 7 1.5 L7 10 Q9 11 9 13 Q9 16.3 5 16.3 Q1 16.3 1 13 Q1 11 3 10 Z" fill="#fff" stroke="#000" stroke-width="1.1"/><rect x="4" y="4" width="2.6" height="8" fill="#f00"/><circle cx="5" cy="13" r="2.9" fill="#f00"/><rect x="3.6" y="12" width="1.2" height="1.2" fill="#fff"/><rect x="6.6" y="1" width="1" height="10" fill="#000"/></svg>
<div class="t" style="left:284.40px;top:44px;font-size:13px;line-height:17px;font-weight:bold;transform:scaleX(0.9492);">26 °C</div>
<div class="b" style="left:374px;top:40px;width:1px;height:22px;background:#a0a0a0;"></div>
<div class="b" style="left:375px;top:40px;width:1px;height:22px;background:#fff;"></div>
<svg class="b" style="left:382px;top:44px" width="16" height="16" viewBox="0 0 16 16" shape-rendering="crispEdges"><rect x="0.5" y="0.5" width="7" height="12" fill="#fff" stroke="#000"/><rect x="2" y="4" width="4" height="1" fill="#00f"/><rect x="2" y="6" width="4" height="1" fill="#00f"/><rect x="2" y="8" width="4" height="1" fill="#00f"/><rect x="8" y="14" width="8" height="1" fill="#000"/><rect x="15" y="5" width="1" height="10" fill="#000"/><polygon points="6.5,2.5 12.5,2.5 14.5,4.5 14.5,14.5 6.5,14.5" fill="#fff" stroke="#000"/><rect x="8" y="6" width="3" height="1" fill="#00f"/><rect x="8" y="8" width="5" height="1" fill="#00f"/><rect x="8" y="10" width="5" height="1" fill="#00f"/><rect x="11" y="12" width="3" height="2" fill="#c0c0c0"/></svg>
<svg class="b" style="left:408px;top:44px" width="16" height="16" viewBox="0 0 16 16" shape-rendering="crispEdges"><rect x="0.5" y="0.5" width="7" height="12" fill="#fff" stroke="#000"/><rect x="2" y="4" width="4" height="1" fill="#00f"/><rect x="2" y="5" width="4" height="5" fill="#0c0"/><rect x="4" y="6" width="2" height="3" fill="#ff0"/><rect x="4" y="6" width="1" height="1" fill="#f00"/><rect x="8" y="14" width="8" height="1" fill="#000"/><rect x="15" y="5" width="1" height="10" fill="#000"/><polygon points="6.5,2.5 12.5,2.5 14.5,4.5 14.5,14.5 6.5,14.5" fill="#fff" stroke="#000"/><rect x="8" y="6" width="4" height="1" fill="#00f"/><rect x="8" y="7" width="4" height="5" fill="#0c0"/><rect x="9" y="8" width="3" height="3" fill="#ff0"/><rect x="10" y="8" width="1" height="1" fill="#f00"/><rect x="12" y="7" width="2" height="7" fill="#c0c0c0"/></svg>
<svg class="b" style="left:435px;top:44px" width="16" height="16" viewBox="0 0 16 16"><path d="M0 0 H15 V15 H2 L0 13 Z" fill="#000"/><path d="M1 1 H14 V14 H2.4 L1 12.6 Z" fill="#0000ff"/><rect x="1" y="1" width="1.6" height="11.5" fill="#00ffff"/><rect x="3.6" y="0.8" width="8.6" height="6.8" fill="#d6d6d6"/><rect x="4.6" y="2.2" width="6.6" height="0.9" fill="#8c8c8c"/><rect x="4.6" y="4" width="6.6" height="0.9" fill="#8c8c8c"/><rect x="4.6" y="5.8" width="6.6" height="0.9" fill="#8c8c8c"/><rect x="3.6" y="10.4" width="9" height="3.6" fill="#6e6e6e"/><rect x="4" y="11.2" width="4.6" height="2.4" fill="#9a9a9a"/><rect x="10" y="11" width="1.9" height="2.8" fill="#f4f4f4"/><rect x="15" y="1" width="1" height="15" fill="#000" opacity="0.55"/><rect x="3" y="15" width="13" height="1" fill="#000" opacity="0.55"/></svg>
<svg class="b" style="left:462px;top:44px" width="17" height="17" viewBox="0 0 17 17"><polygon points="5.20,2.30 6.70,3.29 8.67,3.24 9.01,4.70 10.52,5.61 9.53,6.86 9.88,8.30 8.03,8.75 7.05,10.06 5.20,9.50 3.35,10.06 2.37,8.75 0.52,8.30 0.87,6.86 -0.12,5.61 1.39,4.70 1.73,3.24 3.70,3.29" fill="#000"/><polygon points="5.40,2.10 6.53,3.24 8.42,2.87 8.26,4.25 10.03,4.83 8.65,5.80 9.47,7.05 7.52,7.16 7.01,8.50 5.40,7.70 3.79,8.50 3.28,7.16 1.33,7.05 2.15,5.80 0.77,4.83 2.54,4.25 2.38,2.87 4.27,3.24" fill="#ffff00"/><rect x="0.66" y="3.10" width="1" height="1" fill="#000"/><rect x="2.83" y="1.64" width="1" height="1" fill="#000"/><rect x="6.97" y="1.64" width="1" height="1" fill="#000"/><rect x="9.14" y="3.10" width="1" height="1" fill="#000"/><path d="M4.30 1.20 l1.1 -1.2 l1.1 1.2 v5.2 h-2.2 z" fill="#c8c8d4" stroke="#000" stroke-width="0.7"/><rect x="4.80" y="1.40" width="0.8" height="5" fill="#fff"/><polygon points="10.30,7.30 11.80,8.29 13.77,8.24 14.11,9.70 15.62,10.61 14.63,11.86 14.98,13.30 13.13,13.75 12.15,15.06 10.30,14.50 8.45,15.06 7.47,13.75 5.62,13.30 5.97,11.86 4.98,10.61 6.49,9.70 6.83,8.24 8.80,8.29" fill="#000"/><polygon points="10.50,7.10 11.63,8.24 13.52,7.87 13.36,9.25 15.13,9.83 13.75,10.80 14.57,12.05 12.62,12.16 12.11,13.50 10.50,12.70 8.89,13.50 8.38,12.16 6.43,12.05 7.25,10.80 5.87,9.83 7.64,9.25 7.48,7.87 9.37,8.24" fill="#ffff00"/><rect x="5.76" y="8.10" width="1" height="1" fill="#000"/><rect x="7.93" y="6.64" width="1" height="1" fill="#000"/><rect x="12.07" y="6.64" width="1" height="1" fill="#000"/><rect x="14.24" y="8.10" width="1" height="1" fill="#000"/><path d="M9.40 6.20 l1.1 -1.2 l1.1 1.2 v5.2 h-2.2 z" fill="#c8c8d4" stroke="#000" stroke-width="0.7"/><rect x="9.90" y="6.40" width="0.8" height="5" fill="#fff"/></svg>
<div class="b" style="left:486px;top:40px;width:1px;height:22px;background:#a0a0a0;"></div>
<div class="b" style="left:487px;top:40px;width:1px;height:22px;background:#fff;"></div>
<svg class="b" style="left:500.5px;top:45.5px" width="12.2" height="11.3" viewBox="0 0 13 12"><path d="M2 1.8 L10.6 9.8 M10.6 1.8 L2 9.8" stroke="#000" stroke-width="3.9" stroke-linecap="square"/><path d="M2 1.8 L10.6 9.8 M10.6 1.8 L2 9.8" stroke="#0000ff" stroke-width="2" stroke-linecap="square"/><path d="M1.7 1.4 L5.2 4.7 M10 1.4 L7.6 3.7" stroke="#00e5ff" stroke-width="0.9"/></svg>
<div class="t" style="left:517.30px;top:44px;font-size:12px;line-height:16px;transform:scaleX(0.7848);">Exit</div>
<div class="b" style="left:525px;top:57px;width:5px;height:1px;background:#000;"></div>
<div class="b" style="left:5px;top:94px;width:541px;height:361px;background:#fff;border:1px solid #dcdcdc;box-sizing:border-box;"></div>
<div class="b" style="left:7.5px;top:77px;width:84px;height:18px;background:#f0f0f0;border:1px solid #dcdcdc;box-sizing:border-box;border-bottom:none;"></div>
<svg class="b" style="left:15.1px;top:79px" width="7.2" height="12.8" viewBox="0 0 8 14"><path d="M4 0.6 Q7 0.6 6.6 4 L5.4 8.6 L2.6 8.6 L1.4 4 Q1 0.6 4 0.6 Z" fill="#ff0" stroke="#000" stroke-width="1.1"/><circle cx="4" cy="11.3" r="1.9" fill="#ff0" stroke="#000" stroke-width="1.1"/><rect x="3" y="2" width="1" height="3" fill="#fff"/></svg>
<div class="t" style="left:31.30px;top:78px;font-size:12px;line-height:16px;transform:scaleX(0.8667);">Benchmark</div>
<div class="b" style="left:90.5px;top:77px;width:49px;height:18px;background:#f0f0f0;border:1px solid #dcdcdc;box-sizing:border-box;border-bottom:none;"></div>
<svg class="b" style="left:99.6px;top:79px" width="8.2" height="13.6" viewBox="0 0 9 15"><circle cx="4.8" cy="2.7" r="2.3" fill="#0cf" stroke="#000" stroke-width="1"/><path d="M1.5 6.5 L6.5 6.5 L6.5 12.5 L8 12.5 L8 14.4 L1 14.4 L1 12.5 L2.8 12.5 L2.8 8.3 L1.5 8.3 Z" fill="#00f" stroke="#000" stroke-width="1"/></svg>
<div class="t" style="left:114.50px;top:78px;font-size:12px;line-height:16px;transform:scaleX(0.8743);">Info</div>
<div class="b" style="left:199px;top:77px;width:79.5px;height:18px;background:#f0f0f0;border:1px solid #dcdcdc;box-sizing:border-box;border-bottom:none;"></div>
<svg class="b" style="left:205.5px;top:78.5px" width="13" height="13" viewBox="0 0 13 13"><path d="M6.5 6.5 L11.5 11.5" stroke="#000" stroke-width="3.2" stroke-linecap="round"/><path d="M7 7 L11.3 11.3" stroke="#00c" stroke-width="1.3" stroke-linecap="round"/><circle cx="4.4" cy="4.4" r="3.6" fill="#0e0" stroke="#000" stroke-width="1.1"/><rect x="3" y="2.6" width="1.6" height="1.6" fill="#cfc"/></svg>
<div class="t" style="left:224.20px;top:78px;font-size:12px;line-height:16px;transform:scaleX(0.8596);">Error Scan</div>
<div class="b" style="left:137px;top:74px;width:65px;height:21px;background:#fff;border:1px solid #dcdcdc;box-sizing:border-box;border-bottom:none;"></div>
<svg class="b" style="left:145px;top:77px" width="12" height="13" viewBox="0 0 12 13" shape-rendering="crispEdges"><path d="M4.5 0.5 H7.5 V4.5 H11.5 V8.5 H7.5 V12.5 H4.5 V8.5 H0.5 V4.5 H4.5 Z" fill="#f00" stroke="#000" stroke-width="1"/><rect x="5" y="1" width="1" height="4" fill="#fff"/><rect x="1" y="5" width="4" height="1" fill="#fff"/></svg>
<div class="t" style="left:163.30px;top:76px;font-size:12px;line-height:16px;transform:scaleX(0.8649);">Health</div>
<div class="b" style="left:9px;top:96px;width:535px;height:320px;background:#fff;border:1px solid #828790;border-right:none;box-sizing:border-box;"></div>
<div class="b" style="left:15px;top:122px;width:185px;height:292px;background:#e1e1e1;"></div>
<div class="b" style="left:255px;top:122px;width:55px;height:292px;background:#f0f0f0;"></div>
<div class="b" style="left:380px;top:122px;width:61px;height:292px;background:#f0f0f0;"></div>
<div class="b" style="left:200px;top:98px;width:1px;height:24px;background:#e5e5e5;"></div>
<div class="b" style="left:255px;top:98px;width:1px;height:24px;background:#e5e5e5;"></div>
<div class="b" style="left:310px;top:98px;width:1px;height:24px;background:#e5e5e5;"></div>
<div class="b" style="left:380px;top:98px;width:1px;height:24px;background:#e5e5e5;"></div>
<div class="b" style="left:440px;top:98px;width:1px;height:24px;background:#e5e5e5;"></div>
<div class="b" style="left:490px;top:98px;width:1px;height:24px;background:#e5e5e5;"></div>
<div class="t" style="left:17.00px;top:102px;font-size:12px;line-height:16px;transform:scaleX(0.8750);">ID</div>
<div class="t" style="left:207.20px;top:102px;font-size:12px;line-height:16px;transform:scaleX(0.8750);">Current</div>
<div class="t" style="left:262.30px;top:102px;font-size:12px;line-height:16px;transform:scaleX(0.8750);">Worst</div>
<div class="t" style="left:317.60px;top:102px;font-size:12px;line-height:16px;transform:scaleX(0.8750);">Threshold</div>
<div class="t" style="left:387.00px;top:102px;font-size:12px;line-height:16px;transform:scaleX(0.8750);">Data</div>
<div class="t" style="left:446.80px;top:102px;font-size:12px;line-height:16px;transform:scaleX(0.8750);">Status</div>
<div class="t" style="left:17.00px;top:123px;font-size:12px;line-height:16px;transform:scaleX(0.8750);">(01) Raw Read Error Rate</div>
<div class="t" style="left:207.20px;top:123px;font-size:12px;line-height:16px;transform:scaleX(0.8750);">109</div>
<div class="t" style="left:262.30px;top:123px;font-size:12px;line-height:16px;transform:scaleX(0.8750);">99</div>
<div class="t" style="left:317.60px;top:123px;font-size:12px;line-height:16px;transform:scaleX(0.8750);">6</div>
<div class="t" style="left:387.00px;top:123px;font-size:12px;line-height:16px;transform:scaleX(0.8750);">24410848</div>
<div class="t" style="left:446.80px;top:123px;font-size:12px;line-height:16px;transform:scaleX(0.8750);">Ok</div>
<div class="t" style="left:17.00px;top:140px;font-size:12px;line-height:16px;transform:scaleX(0.8750);">(03) Spin Up Time</div>
<div class="t" style="left:207.20px;top:140px;font-size:12px;line-height:16px;transform:scaleX(0.8750);">97</div>
<div class="t" style="left:262.30px;top:140px;font-size:12px;line-height:16px;transform:scaleX(0.8750);">97</div>
<div class="t" style="left:317.60px;top:140px;font-size:12px;line-height:16px;transform:scaleX(0.8750);">0</div>
<div class="t" style="left:387.00px;top:140px;font-size:12px;line-height:16px;transform:scaleX(0.8750);">0</div>
<div class="t" style="left:446.80px;top:140px;font-size:12px;line-height:16px;transform:scaleX(0.8750);">Ok</div>
<div class="t" style="left:17.00px;top:157px;font-size:12px;line-height:16px;transform:scaleX(0.8750);">(04) Start/Stop Count</div>
<div class="t" style="left:207.20px;top:157px;font-size:12px;line-height:16px;transform:scaleX(0.8750);">98</div>
<div class="t" style="left:262.30px;top:157px;font-size:12px;line-height:16px;transform:scaleX(0.8750);">98</div>
<div class="t" style="left:317.60px;top:157px;font-size:12px;line-height:16px;transform:scaleX(0.8750);">20</div>
<div class="t" style="left:387.00px;top:157px;font-size:12px;line-height:16px;transform:scaleX(0.8750);">2335</div>
<div class="t" style="left:446.80px;top:157px;font-size:12px;line-height:16px;transform:scaleX(0.8750);">Ok</div>
<div class="t" style="left:17.00px;top:174px;font-size:12px;line-height:16px;transform:scaleX(0.8750);">(05) Reallocated Sector Count</div>
<div class="t" style="left:207.20px;top:174px;font-size:12px;line-height:16px;transform:scaleX(0.8750);">100</div>
<div class="t" style="left:262.30px;top:174px;font-size:12px;line-height:16px;transform:scaleX(0.8750);">100</div>
<div class="t" style="left:317.60px;top:174px;font-size:12px;line-height:16px;transform:scaleX(0.8750);">10</div>
<div class="t" style="left:387.00px;top:174px;font-size:12px;line-height:16px;transform:scaleX(0.8750);">0</div>
<div class="t" style="left:446.80px;top:174px;font-size:12px;line-height:16px;transform:scaleX(0.8750);">Ok</div>
<div class="t" style="left:17.00px;top:191px;font-size:12px;line-height:16px;transform:scaleX(0.8750);">(07) Seek Error Rate</div>
<div class="t" style="left:207.20px;top:191px;font-size:12px;line-height:16px;transform:scaleX(0.8750);">86</div>
<div class="t" style="left:262.30px;top:191px;font-size:12px;line-height:16px;transform:scaleX(0.8750);">60</div>
<div class="t" style="left:317.60px;top:191px;font-size:12px;line-height:16px;transform:scaleX(0.8750);">30</div>
<div class="t" style="left:387.00px;top:191px;font-size:12px;line-height:16px;transform:scaleX(0.8750);">439582...</div>
<div class="t" style="left:446.80px;top:191px;font-size:12px;line-height:16px;transform:scaleX(0.8750);">Ok</div>
<div class="t" style="left:17.00px;top:208px;font-size:12px;line-height:16px;transform:scaleX(0.8750);">(09) Power On Hours Count</div>
<div class="t" style="left:207.20px;top:208px;font-size:12px;line-height:16px;transform:scaleX(0.8750);">89</div>
<div class="t" style="left:262.30px;top:208px;font-size:12px;line-height:16px;transform:scaleX(0.8750);">89</div>
<div class="t" style="left:317.60px;top:208px;font-size:12px;line-height:16px;transform:scaleX(0.8750);">0</div>
<div class="t" style="left:387.00px;top:208px;font-size:12px;line-height:16px;transform:scaleX(0.8750);">9681</div>
<div class="t" style="left:446.80px;top:208px;font-size:12px;line-height:16px;transform:scaleX(0.8750);">Ok</div>
<div class="b" style="left:15px;top:224px;width:476px;height:17px;background:#ffff33;"></div>
<div class="t" style="left:17.00px;top:225px;font-size:12px;line-height:16px;transform:scaleX(0.8750);">(0A) Spin Retry Count</div>
<div class="t" style="left:207.20px;top:225px;font-size:12px;line-height:16px;transform:scaleX(0.8750);">100</div>
<div class="t" style="left:262.30px;top:225px;font-size:12px;line-height:16px;transform:scaleX(0.8750);">100</div>
<div class="t" style="left:317.60px;top:225px;font-size:12px;line-height:16px;transform:scaleX(0.8750);">97</div>
<div class="t" style="left:387.00px;top:225px;font-size:12px;line-height:16px;transform:scaleX(0.8750);">0</div>
<div class="t" style="left:446.80px;top:225px;font-size:12px;line-height:16px;transform:scaleX(0.8750);">Ok</div>
<div class="t" style="left:17.00px;top:242px;font-size:12px;line-height:16px;transform:scaleX(0.8750);">(0C) Power Cycle Count</div>
<div class="t" style="left:207.20px;top:242px;font-size:12px;line-height:16px;transform:scaleX(0.8750);">98</div>
<div class="t" style="left:262.30px;top:242px;font-size:12px;line-height:16px;transform:scaleX(0.8750);">98</div>
<div class="t" style="left:317.60px;top:242px;font-size:12px;line-height:16px;transform:scaleX(0.8750);">20</div>
<div class="t" style="left:387.00px;top:242px;font-size:12px;line-height:16px;transform:scaleX(0.8750);">2332</div>
<div class="t" style="left:446.80px;top:242px;font-size:12px;line-height:16px;transform:scaleX(0.8750);">Ok</div>
<div class="t" style="left:17.00px;top:259px;font-size:12px;line-height:16px;transform:scaleX(0.8750);">(B7) (unknown attribute)</div>
<div class="t" style="left:207.20px;top:259px;font-size:12px;line-height:16px;transform:scaleX(0.8750);">100</div>
<div class="t" style="left:262.30px;top:259px;font-size:12px;line-height:16px;transform:scaleX(0.8750);">100</div>
<div class="t" style="left:317.60px;top:259px;font-size:12px;line-height:16px;transform:scaleX(0.8750);">0</div>
<div class="t" style="left:387.00px;top:259px;font-size:12px;line-height:16px;transform:scaleX(0.8750);">0</div>
<div class="t" style="left:446.80px;top:259px;font-size:12px;line-height:16px;transform:scaleX(0.8750);">Ok</div>
<div class="b" style="left:15px;top:275px;width:476px;height:17px;background:#ffff33;"></div>
<div class="t" style="left:17.00px;top:276px;font-size:12px;line-height:16px;transform:scaleX(0.8750);">(B8) (unknown attribute)</div>
<div class="t" style="left:207.20px;top:276px;font-size:12px;line-height:16px;transform:scaleX(0.8750);">100</div>
<div class="t" style="left:262.30px;top:276px;font-size:12px;line-height:16px;transform:scaleX(0.8750);">100</div>
<div class="t" style="left:317.60px;top:276px;font-size:12px;line-height:16px;transform:scaleX(0.8750);">99</div>
<div class="t" style="left:387.00px;top:276px;font-size:12px;line-height:16px;transform:scaleX(0.8750);">0</div>
<div class="t" style="left:446.80px;top:276px;font-size:12px;line-height:16px;transform:scaleX(0.8750);">Ok</div>
<div class="t" style="left:17.00px;top:293px;font-size:12px;line-height:16px;transform:scaleX(0.8750);">(BB) (unknown attribute)</div>
<div class="t" style="left:207.20px;top:293px;font-size:12px;line-height:16px;transform:scaleX(0.8750);">100</div>
<div class="t" style="left:262.30px;top:293px;font-size:12px;line-height:16px;transform:scaleX(0.8750);">100</div>
<div class="t" style="left:317.60px;top:293px;font-size:12px;line-height:16px;transform:scaleX(0.8750);">0</div>
<div class="t" style="left:387.00px;top:293px;font-size:12px;line-height:16px;transform:scaleX(0.8750);">0</div>
<div class="t" style="left:446.80px;top:293px;font-size:12px;line-height:16px;transform:scaleX(0.8750);">Ok</div>
<div class="t" style="left:17.00px;top:310px;font-size:12px;line-height:16px;transform:scaleX(0.8750);">(BC) (unknown attribute)</div>
<div class="t" style="left:207.20px;top:310px;font-size:12px;line-height:16px;transform:scaleX(0.8750);">100</div>
<div class="t" style="left:262.30px;top:310px;font-size:12px;line-height:16px;transform:scaleX(0.8750);">99</div>
<div class="t" style="left:317.60px;top:310px;font-size:12px;line-height:16px;transform:scaleX(0.8750);">0</div>
<div class="t" style="left:387.00px;top:310px;font-size:12px;line-height:16px;transform:scaleX(0.8750);">196638</div>
<div class="t" style="left:446.80px;top:310px;font-size:12px;line-height:16px;transform:scaleX(0.8750);">Ok</div>
<div class="t" style="left:17.00px;top:327px;font-size:12px;line-height:16px;transform:scaleX(0.8750);">(BD) (unknown attribute)</div>
<div class="t" style="left:207.20px;top:327px;font-size:12px;line-height:16px;transform:scaleX(0.8750);">70</div>
<div class="t" style="left:262.30px;top:327px;font-size:12px;line-height:16px;transform:scaleX(0.8750);">70</div>
<div class="t" style="left:317.60px;top:327px;font-size:12px;line-height:16px;transform:scaleX(0.8750);">0</div>
<div class="t" style="left:387.00px;top:327px;font-size:12px;line-height:16px;transform:scaleX(0.8750);">30</div>
<div class="t" style="left:446.80px;top:327px;font-size:12px;line-height:16px;transform:scaleX(0.8750);">Ok</div>
<div class="t" style="left:17.00px;top:344px;font-size:12px;line-height:16px;transform:scaleX(0.8750);">(BE) Airflow Temperature</div>
<div class="t" style="left:207.20px;top:344px;font-size:12px;line-height:16px;transform:scaleX(0.8750);">74</div>
<div class="t" style="left:262.30px;top:344px;font-size:12px;line-height:16px;transform:scaleX(0.8750);">55</div>
<div class="t" style="left:317.60px;top:344px;font-size:12px;line-height:16px;transform:scaleX(0.8750);">45</div>
<div class="t" style="left:387.00px;top:344px;font-size:12px;line-height:16px;transform:scaleX(0.8750);">437452...</div>
<div class="t" style="left:446.80px;top:344px;font-size:12px;line-height:16px;transform:scaleX(0.8750);">Ok</div>
<div class="t" style="left:17.00px;top:361px;font-size:12px;line-height:16px;transform:scaleX(0.8750);">(BF) G-sense Error Rate</div>
<div class="t" style="left:207.20px;top:361px;font-size:12px;line-height:16px;transform:scaleX(0.8750);">100</div>
<div class="t" style="left:262.30px;top:361px;font-size:12px;line-height:16px;transform:scaleX(0.8750);">100</div>
<div class="t" style="left:317.60px;top:361px;font-size:12px;line-height:16px;transform:scaleX(0.8750);">0</div>
<div class="t" style="left:387.00px;top:361px;font-size:12px;line-height:16px;transform:scaleX(0.8750);">0</div>
<div class="t" style="left:446.80px;top:361px;font-size:12px;line-height:16px;transform:scaleX(0.8750);">Ok</div>
<div class="t" style="left:17.00px;top:378px;font-size:12px;line-height:16px;transform:scaleX(0.8750);">(C0) Power Off Retract Count</div>
<div class="t" style="left:207.20px;top:378px;font-size:12px;line-height:16px;transform:scaleX(0.8750);">100</div>
<div class="t" style="left:262.30px;top:378px;font-size:12px;line-height:16px;transform:scaleX(0.8750);">100</div>
<div class="t" style="left:317.60px;top:378px;font-size:12px;line-height:16px;transform:scaleX(0.8750);">0</div>
<div class="t" style="left:387.00px;top:378px;font-size:12px;line-height:16px;transform:scaleX(0.8750);">85</div>
<div class="t" style="left:446.80px;top:378px;font-size:12px;line-height:16px;transform:scaleX(0.8750);">Ok</div>
<div class="t" style="left:17.00px;top:395px;font-size:12px;line-height:16px;transform:scaleX(0.8750);">(C1) Load Cycle Count</div>
<div class="t" style="left:207.20px;top:395px;font-size:12px;line-height:16px;transform:scaleX(0.8750);">97</div>
<div class="t" style="left:262.30px;top:395px;font-size:12px;line-height:16px;transform:scaleX(0.8750);">97</div>
<div class="t" style="left:317.60px;top:395px;font-size:12px;line-height:16px;transform:scaleX(0.8750);">0</div>
<div class="t" style="left:387.00px;top:395px;font-size:12px;line-height:16px;transform:scaleX(0.8750);">6857</div>
<div class="t" style="left:446.80px;top:395px;font-size:12px;line-height:16px;transform:scaleX(0.8750);">Ok</div>
<div class="b" style="left:527px;top:98px;width:16px;height:316px;background:#f0f0f0;"></div>
<div class="b" style="left:527px;top:115px;width:15px;height:199px;background:#cdcdcd;"></div>
<svg class="b" style="left:530.6px;top:103px" width="8" height="7" viewBox="0 0 8 7"><path d="M0.9 5.6 L4 2.2 L7.1 5.6" fill="none" stroke="#505050" stroke-width="2.3"/></svg>
<svg class="b" style="left:530.6px;top:402px" width="8" height="7" viewBox="0 0 8 7"><path d="M0.9 1.4 L4 4.8 L7.1 1.4" fill="none" stroke="#505050" stroke-width="2.3"/></svg>
<div class="t" style="left:14.30px;top:423px;font-size:12px;line-height:16px;transform:scaleX(0.8765);">Power On Time:</div>
<div class="t" style="left:119.50px;top:422px;font-size:13px;line-height:17px;font-weight:bold;transform:scaleX(0.9508);">9681</div>
<div class="t" style="left:297.00px;top:423px;font-size:12px;line-height:16px;transform:scaleX(0.8955);">Health Status:</div>
<div class="t" style="left:422.00px;top:422px;font-size:13px;line-height:17px;font-weight:bold;color:#00c000;transform:scaleX(0.9226);">Ok</div>
</div>
<div class="w" style="left:568px;top:460px">
<svg class="b" style="left:-2.9px;top:4.1px" width="16.2" height="16.2" viewBox="0 0 18 18"><g transform="rotate(-42 8.6 8.6)"><rect x="0.6" y="3.6" width="16" height="10.4" rx="1.6" fill="#3f566c"/><rect x="0.9" y="3.3" width="15.4" height="9.6" rx="1.5" fill="#6d8599"/><rect x="1.6" y="5" width="2.4" height="5.6" rx="1" fill="#c3ccd4"/><rect x="4.2" y="9.4" width="4.2" height="2.6" fill="#4c5f70"/></g><circle cx="10" cy="6.9" r="4.5" fill="#c4a994"/><ellipse cx="9.4" cy="9.6" rx="2.4" ry="1.3" fill="#e3c0a6"/><circle cx="9.9" cy="6.6" r="1.1" fill="#b39c8b"/></svg>
<div class="t" style="left:18.00px;top:4px;font-size:12px;line-height:16px;transform:scaleX(0.9762);">HD Tune 2.55 - Hard Disk Utility</div>
<div class="b" style="left:439px;top:12px;width:10px;height:1px;background:#000;"></div>
<div class="b" style="left:484px;top:7px;width:10px;height:10px;border:1px solid #c4c4c4;box-sizing:border-box;"></div>
<svg class="b" style="left:529px;top:6px" width="12" height="12" viewBox="0 0 12 12"><path d="M1 1 L11 11 M11 1 L1 11" stroke="#000" stroke-width="1.1"/></svg>
<div class="b" style="left:5px;top:34px;width:543px;height:35px;border:1px solid #dcdcdc;box-sizing:border-box;"></div>
<div class="b" style="left:12px;top:41px;width:236px;height:21px;background:#e1e1e1;border:1px solid #adadad;box-sizing:border-box;"></div>
<div class="t" style="left:16.00px;top:45px;font-size:12px;line-height:16px;transform:scaleX(0.8857);">ST1000DM003-1CH162 (1000 GB)</div>
<svg class="b" style="left:235px;top:48.5px" width="11" height="7" viewBox="0 0 11 7"><path d="M0.5 0.5 L5.5 5.5 L10.5 0.5" fill="none" stroke="#404040" stroke-width="1.1"/></svg>
<svg class="b" style="left:270px;top:43px" width="10" height="17" viewBox="0 0 10 17"><path d="M3 1.5 Q3 0.6 4.5 0.6 L5.5 0.6 Q7 0.6 7 1.5 L7 10 Q9 11 9 13 Q9 16.3 5 16.3 Q1 16.3 1 13 Q1 11 3 10 Z" fill="#fff" stroke="#000" stroke-width="1.1"/><rect x="4" y="4" width="2.6" height="8" fill="#f00"/><circle cx="5" cy="13" r="2.9" fill="#f00"/><rect x="3.6" y="12" width="1.2" height="1.2" fill="#fff"/><rect x="6.6" y="1" width="1" height="10" fill="#000"/></svg>
<div class="t" style="left:284.40px;top:44px;font-size:13px;line-height:17px;font-weight:bold;transform:scaleX(0.9492);">26 °C</div>
<div class="b" style="left:374px;top:40px;width:1px;height:22px;background:#a0a0a0;"></div>
<div class="b" style="left:375px;top:40px;width:1px;height:22px;background:#fff;"></div>
<svg class="b" style="left:382px;top:44px" width="16" height="16" viewBox="0 0 16 16" shape-rendering="crispEdges"><rect x="0.5" y="0.5" width="7" height="12" fill="#fff" stroke="#000"/><rect x="2" y="4" width="4" height="1" fill="#00f"/><rect x="2" y="6" width="4" height="1" fill="#00f"/><rect x="2" y="8" width="4" height="1" fill="#00f"/><rect x="8" y="14" width="8" height="1" fill="#000"/><rect x="15" y="5" width="1" height="10" fill="#000"/><polygon points="6.5,2.5 12.5,2.5 14.5,4.5 14.5,14.5 6.5,14.5" fill="#fff" stroke="#000"/><rect x="8" y="6" width="3" height="1" fill="#00f"/><rect x="8" y="8" width="5" height="1" fill="#00f"/><rect x="8" y="10" width="5" height="1" fill="#00f"/><rect x="11" y="12" width="3" height="2" fill="#c0c0c0"/></svg>
<svg class="b" style="left:408px;top:44px" width="16" height="16" viewBox="0 0 16 16" shape-rendering="crispEdges"><rect x="0.5" y="0.5" width="7" height="12" fill="#fff" stroke="#000"/><rect x="2" y="4" width="4" height="1" fill="#00f"/><rect x="2" y="5" width="4" height="5" fill="#0c0"/><rect x="4" y="6" width="2" height="3" fill="#ff0"/><rect x="4" y="6" width="1" height="1" fill="#f00"/><rect x="8" y="14" width="8" height="1" fill="#000"/><rect x="15" y="5" width="1" height="10" fill="#000"/><polygon points="6.5,2.5 12.5,2.5 14.5,4.5 14.5,14.5 6.5,14.5" fill="#fff" stroke="#000"/><rect x="8" y="6" width="4" height="1" fill="#00f"/><rect x="8" y="7" width="4" height="5" fill="#0c0"/><rect x="9" y="8" width="3" height="3" fill="#ff0"/><rect x="10" y="8" width="1" height="1" fill="#f00"/><rect x="12" y="7" width="2" height="7" fill="#c0c0c0"/></svg>
<svg class="b" style="left:435px;top:44px" width="16" height="16" viewBox="0 0 16 16"><path d="M0 0 H15 V15 H2 L0 13 Z" fill="#000"/><path d="M1 1 H14 V14 H2.4 L1 12.6 Z" fill="#0000ff"/><rect x="1" y="1" width="1.6" height="11.5" fill="#00ffff"/><rect x="3.6" y="0.8" width="8.6" height="6.8" fill="#d6d6d6"/><rect x="4.6" y="2.2" width="6.6" height="0.9" fill="#8c8c8c"/><rect x="4.6" y="4" width="6.6" height="0.9" fill="#8c8c8c"/><rect x="4.6" y="5.8" width="6.6" height="0.9" fill="#8c8c8c"/><rect x="3.6" y="10.4" width="9" height="3.6" fill="#6e6e6e"/><rect x="4" y="11.2" width="4.6" height="2.4" fill="#9a9a9a"/><rect x="10" y="11" width="1.9" height="2.8" fill="#f4f4f4"/><rect x="15" y="1" width="1" height="15" fill="#000" opacity="0.55"/><rect x="3" y="15" width="13" height="1" fill="#000" opacity="0.55"/></svg>
<svg class="b" style="left:462px;top:44px" width="17" height="17" viewBox="0 0 17 17"><polygon points="5.20,2.30 6.70,3.29 8.67,3.24 9.01,4.70 10.52,5.61 9.53,6.86 9.88,8.30 8.03,8.75 7.05,10.06 5.20,9.50 3.35,10.06 2.37,8.75 0.52,8.30 0.87,6.86 -0.12,5.61 1.39,4.70 1.73,3.24 3.70,3.29" fill="#000"/><polygon points="5.40,2.10 6.53,3.24 8.42,2.87 8.26,4.25 10.03,4.83 8.65,5.80 9.47,7.05 7.52,7.16 7.01,8.50 5.40,7.70 3.79,8.50 3.28,7.16 1.33,7.05 2.15,5.80 0.77,4.83 2.54,4.25 2.38,2.87 4.27,3.24" fill="#ffff00"/><rect x="0.66" y="3.10" width="1" height="1" fill="#000"/><rect x="2.83" y="1.64" width="1" height="1" fill="#000"/><rect x="6.97" y="1.64" width="1" height="1" fill="#000"/><rect x="9.14" y="3.10" width="1" height="1" fill="#000"/><path d="M4.30 1.20 l1.1 -1.2 l1.1 1.2 v5.2 h-2.2 z" fill="#c8c8d4" stroke="#000" stroke-width="0.7"/><rect x="4.80" y="1.40" width="0.8" height="5" fill="#fff"/><polygon points="10.30,7.30 11.80,8.29 13.77,8.24 14.11,9.70 15.62,10.61 14.63,11.86 14.98,13.30 13.13,13.75 12.15,15.06 10.30,14.50 8.45,15.06 7.47,13.75 5.62,13.30 5.97,11.86 4.98,10.61 6.49,9.70 6.83,8.24 8.80,8.29" fill="#000"/><polygon points="10.50,7.10 11.63,8.24 13.52,7.87 13.36,9.25 15.13,9.83 13.75,10.80 14.57,12.05 12.62,12.16 12.11,13.50 10.50,12.70 8.89,13.50 8.38,12.16 6.43,12.05 7.25,10.80 5.87,9.83 7.64,9.25 7.48,7.87 9.37,8.24" fill="#ffff00"/><rect x="5.76" y="8.10" width="1" height="1" fill="#000"/><rect x="7.93" y="6.64" width="1" height="1" fill="#000"/><rect x="12.07" y="6.64" width="1" height="1" fill="#000"/><rect x="14.24" y="8.10" width="1" height="1" fill="#000"/><path d="M9.40 6.20 l1.1 -1.2 l1.1 1.2 v5.2 h-2.2 z" fill="#c8c8d4" stroke="#000" stroke-width="0.7"/><rect x="9.90" y="6.40" width="0.8" height="5" fill="#fff"/></svg>
<div class="b" style="left:486px;top:40px;width:1px;height:22px;background:#a0a0a0;"></div>
<div class="b" style="left:487px;top:40px;width:1px;height:22px;background:#fff;"></div>
<svg class="b" style="left:500.5px;top:45.5px" width="12.2" height="11.3" viewBox="0 0 13 12"><path d="M2 1.8 L10.6 9.8 M10.6 1.8 L2 9.8" stroke="#000" stroke-width="3.9" stroke-linecap="square"/><path d="M2 1.8 L10.6 9.8 M10.6 1.8 L2 9.8" stroke="#0000ff" stroke-width="2" stroke-linecap="square"/><path d="M1.7 1.4 L5.2 4.7 M10 1.4 L7.6 3.7" stroke="#00e5ff" stroke-width="0.9"/></svg>
<div class="t" style="left:517.30px;top:44px;font-size:12px;line-height:16px;transform:scaleX(0.7848);">Exit</div>
<div class="b" style="left:525px;top:57px;width:5px;height:1px;background:#000;"></div>
<div class="b" style="left:5px;top:94px;width:541px;height:361px;background:#fff;border:1px solid #dcdcdc;box-sizing:border-box;"></div>
<div class="b" style="left:7.5px;top:77px;width:84px;height:18px;background:#f0f0f0;border:1px solid #dcdcdc;box-sizing:border-box;border-bottom:none;"></div>
<svg class="b" style="left:15.1px;top:79px" width="7.2" height="12.8" viewBox="0 0 8 14"><path d="M4 0.6 Q7 0.6 6.6 4 L5.4 8.6 L2.6 8.6 L1.4 4 Q1 0.6 4 0.6 Z" fill="#ff0" stroke="#000" stroke-width="1.1"/><circle cx="4" cy="11.3" r="1.9" fill="#ff0" stroke="#000" stroke-width="1.1"/><rect x="3" y="2" width="1" height="3" fill="#fff"/></svg>
<div class="t" style="left:31.30px;top:78px;font-size:12px;line-height:16px;transform:scaleX(0.8667);">Benchmark</div>
<div class="b" style="left:90.5px;top:77px;width:49px;height:18px;background:#f0f0f0;border:1px solid #dcdcdc;box-sizing:border-box;border-bottom:none;"></div>
<svg class="b" style="left:99.6px;top:79px" width="8.2" height="13.6" viewBox="0 0 9 15"><circle cx="4.8" cy="2.7" r="2.3" fill="#0cf" stroke="#000" stroke-width="1"/><path d="M1.5 6.5 L6.5 6.5 L6.5 12.5 L8 12.5 L8 14.4 L1 14.4 L1 12.5 L2.8 12.5 L2.8 8.3 L1.5 8.3 Z" fill="#00f" stroke="#000" stroke-width="1"/></svg>
<div class="t" style="left:114.50px;top:78px;font-size:12px;line-height:16px;transform:scaleX(0.8743);">Info</div>
<div class="b" style="left:199px;top:77px;width:79.5px;height:18px;background:#f0f0f0;border:1px solid #dcdcdc;box-sizing:border-box;border-bottom:none;"></div>
<svg class="b" style="left:205.5px;top:78.5px" width="13" height="13" viewBox="0 0 13 13"><path d="M6.5 6.5 L11.5 11.5" stroke="#000" stroke-width="3.2" stroke-linecap="round"/><path d="M7 7 L11.3 11.3" stroke="#00c" stroke-width="1.3" stroke-linecap="round"/><circle cx="4.4" cy="4.4" r="3.6" fill="#0e0" stroke="#000" stroke-width="1.1"/><rect x="3" y="2.6" width="1.6" height="1.6" fill="#cfc"/></svg>
<div class="t" style="left:224.20px;top:78px;font-size:12px;line-height:16px;transform:scaleX(0.8596);">Error Scan</div>
<div class="b" style="left:137px;top:74px;width:65px;height:21px;background:#fff;border:1px solid #dcdcdc;box-sizing:border-box;border-bottom:none;"></div>
<svg class="b" style="left:145px;top:77px" width="12" height="13" viewBox="0 0 12 13" shape-rendering="crispEdges"><path d="M4.5 0.5 H7.5 V4.5 H11.5 V8.5 H7.5 V12.5 H4.5 V8.5 H0.5 V4.5 H4.5 Z" fill="#f00" stroke="#000" stroke-width="1"/><rect x="5" y="1" width="1" height="4" fill="#fff"/><rect x="1" y="5" width="4" height="1" fill="#fff"/></svg>
<div class="t" style="left:163.30px;top:76px;font-size:12px;line-height:16px;transform:scaleX(0.8649);">Health</div>
<div class="b" style="left:9px;top:96px;width:535px;height:320px;background:#fff;border:1px solid #828790;border-right:none;box-sizing:border-box;"></div>
<div class="b" style="left:15px;top:122px;width:186px;height:289px;background:#e1e1e1;"></div>
<div class="b" style="left:255px;top:122px;width:55px;height:289px;background:#f0f0f0;"></div>
<div class="b" style="left:380px;top:122px;width:61px;height:289px;background:#f0f0f0;"></div>
<div class="b" style="left:200px;top:98px;width:1px;height:24px;background:#e5e5e5;"></div>
<div class="b" style="left:255px;top:98px;width:1px;height:24px;background:#e5e5e5;"></div>
<div class="b" style="left:310px;top:98px;width:1px;height:24px;background:#e5e5e5;"></div>
<div class="b" style="left:380px;top:98px;width:1px;height:24px;background:#e5e5e5;"></div>
<div class="b" style="left:440px;top:98px;width:1px;height:24px;background:#e5e5e5;"></div>
<div class="b" style="left:490px;top:98px;width:1px;height:24px;background:#e5e5e5;"></div>
<div class="t" style="left:17.00px;top:102px;font-size:12px;line-height:16px;transform:scaleX(0.8750);">ID</div>
<div class="t" style="left:207.20px;top:102px;font-size:12px;line-height:16px;transform:scaleX(0.8750);">Current</div>
<div class="t" style="left:262.30px;top:102px;font-size:12px;line-height:16px;transform:scaleX(0.8750);">Worst</div>
<div class="t" style="left:317.60px;top:102px;font-size:12px;line-height:16px;transform:scaleX(0.8750);">Threshold</div>
<div class="t" style="left:387.00px;top:102px;font-size:12px;line-height:16px;transform:scaleX(0.8750);">Data</div>
<div class="t" style="left:446.80px;top:102px;font-size:12px;line-height:16px;transform:scaleX(0.8750);">Status</div>
<div class="t" style="left:17.00px;top:123px;font-size:12px;line-height:16px;transform:scaleX(0.8750);">(0C) Power Cycle Count</div>
<div class="t" style="left:207.20px;top:123px;font-size:12px;line-height:16px;transform:scaleX(0.8750);">98</div>
<div class="t" style="left:262.30px;top:123px;font-size:12px;line-height:16px;transform:scaleX(0.8750);">98</div>
<div class="t" style="left:317.60px;top:123px;font-size:12px;line-height:16px;transform:scaleX(0.8750);">20</div>
<div class="t" style="left:387.00px;top:123px;font-size:12px;line-height:16px;transform:scaleX(0.8750);">2332</div>
<div class="t" style="left:446.80px;top:123px;font-size:12px;line-height:16px;transform:scaleX(0.8750);">Ok</div>
<div class="t" style="left:17.00px;top:140px;font-size:12px;line-height:16px;transform:scaleX(0.8750);">(B7) (unknown attribute)</div>
<div class="t" style="left:207.20px;top:140px;font-size:12px;line-height:16px;transform:scaleX(0.8750);">100</div>
<div class="t" style="left:262.30px;top:140px;font-size:12px;line-height:16px;transform:scaleX(0.8750);">100</div>
<div class="t" style="left:317.60px;top:140px;font-size:12px;line-height:16px;transform:scaleX(0.8750);">0</div>
<div class="t" style="left:387.00px;top:140px;font-size:12px;line-height:16px;transform:scaleX(0.8750);">0</div>
<div class="t" style="left:446.80px;top:140px;font-size:12px;line-height:16px;transform:scaleX(0.8750);">Ok</div>
<div class="b" style="left:15px;top:156px;width:476px;height:17px;background:#ffff33;"></div>
<div class="t" style="left:17.00px;top:157px;font-size:12px;line-height:16px;transform:scaleX(0.8750);">(B8) (unknown attribute)</div>
<div class="t" style="left:207.20px;top:157px;font-size:12px;line-height:16px;transform:scaleX(0.8750);">100</div>
<div class="t" style="left:262.30px;top:157px;font-size:12px;line-height:16px;transform:scaleX(0.8750);">100</div>
<div class="t" style="left:317.60px;top:157px;font-size:12px;line-height:16px;transform:scaleX(0.8750);">99</div>
<div class="t" style="left:387.00px;top:157px;font-size:12px;line-height:16px;transform:scaleX(0.8750);">0</div>
<div class="t" style="left:446.80px;top:157px;font-size:12px;line-height:16px;transform:scaleX(0.8750);">Ok</div>
<div class="t" style="left:17.00px;top:174px;font-size:12px;line-height:16px;transform:scaleX(0.8750);">(BB) (unknown attribute)</div>
<div class="t" style="left:207.20px;top:174px;font-size:12px;line-height:16px;transform:scaleX(0.8750);">100</div>
<div class="t" style="left:262.30px;top:174px;font-size:12px;line-height:16px;transform:scaleX(0.8750);">100</div>
<div class="t" style="left:317.60px;top:174px;font-size:12px;line-height:16px;transform:scaleX(0.8750);">0</div>
<div class="t" style="left:387.00px;top:174px;font-size:12px;line-height:16px;transform:scaleX(0.8750);">0</div>
<div class="t" style="left:446.80px;top:174px;font-size:12px;line-height:16px;transform:scaleX(0.8750);">Ok</div>
<div class="t" style="left:17.00px;top:191px;font-size:12px;line-height:16px;transform:scaleX(0.8750);">(BC) (unknown attribute)</div>
<div class="t" style="left:207.20px;top:191px;font-size:12px;line-height:16px;transform:scaleX(0.8750);">100</div>
<div class="t" style="left:262.30px;top:191px;font-size:12px;line-height:16px;transform:scaleX(0.8750);">99</div>
<div class="t" style="left:317.60px;top:191px;font-size:12px;line-height:16px;transform:scaleX(0.8750);">0</div>
<div class="t" style="left:387.00px;top:191px;font-size:12px;line-height:16px;transform:scaleX(0.8750);">196638</div>
<div class="t" style="left:446.80px;top:191px;font-size:12px;line-height:16px;transform:scaleX(0.8750);">Ok</div>
<div class="t" style="left:17.00px;top:208px;font-size:12px;line-height:16px;transform:scaleX(0.8750);">(BD) (unknown attribute)</div>
<div class="t" style="left:207.20px;top:208px;font-size:12px;line-height:16px;transform:scaleX(0.8750);">70</div>
<div class="t" style="left:262.30px;top:208px;font-size:12px;line-height:16px;transform:scaleX(0.8750);">70</div>
<div class="t" style="left:317.60px;top:208px;font-size:12px;line-height:16px;transform:scaleX(0.8750);">0</div>
<div class="t" style="left:387.00px;top:208px;font-size:12px;line-height:16px;transform:scaleX(0.8750);">30</div>
<div class="t" style="left:446.80px;top:208px;font-size:12px;line-height:16px;transform:scaleX(0.8750);">Ok</div>
<div class="t" style="left:17.00px;top:225px;font-size:12px;line-height:16px;transform:scaleX(0.8750);">(BE) Airflow Temperature</div>
<div class="t" style="left:207.20px;top:225px;font-size:12px;line-height:16px;transform:scaleX(0.8750);">74</div>
<div class="t" style="left:262.30px;top:225px;font-size:12px;line-height:16px;transform:scaleX(0.8750);">55</div>
<div class="t" style="left:317.60px;top:225px;font-size:12px;line-height:16px;transform:scaleX(0.8750);">45</div>
<div class="t" style="left:387.00px;top:225px;font-size:12px;line-height:16px;transform:scaleX(0.8750);">437452...</div>
<div class="t" style="left:446.80px;top:225px;font-size:12px;line-height:16px;transform:scaleX(0.8750);">Ok</div>
<div class="t" style="left:17.00px;top:242px;font-size:12px;line-height:16px;transform:scaleX(0.8750);">(BF) G-sense Error Rate</div>
<div class="t" style="left:207.20px;top:242px;font-size:12px;line-height:16px;transform:scaleX(0.8750);">100</div>
<div class="t" style="left:262.30px;top:242px;font-size:12px;line-height:16px;transform:scaleX(0.8750);">100</div>
<div class="t" style="left:317.60px;top:242px;font-size:12px;line-height:16px;transform:scaleX(0.8750);">0</div>
<div class="t" style="left:387.00px;top:242px;font-size:12px;line-height:16px;transform:scaleX(0.8750);">0</div>
<div class="t" style="left:446.80px;top:242px;font-size:12px;line-height:16px;transform:scaleX(0.8750);">Ok</div>
<div class="t" style="left:17.00px;top:259px;font-size:12px;line-height:16px;transform:scaleX(0.8750);">(C0) Power Off Retract Count</div>
<div class="t" style="left:207.20px;top:259px;font-size:12px;line-height:16px;transform:scaleX(0.8750);">100</div>
<div class="t" style="left:262.30px;top:259px;font-size:12px;line-height:16px;transform:scaleX(0.8750);">100</div>
<div class="t" style="left:317.60px;top:259px;font-size:12px;line-height:16px;transform:scaleX(0.8750);">0</div>
<div class="t" style="left:387.00px;top:259px;font-size:12px;line-height:16px;transform:scaleX(0.8750);">85</div>
<div class="t" style="left:446.80px;top:259px;font-size:12px;line-height:16px;transform:scaleX(0.8750);">Ok</div>
<div class="t" style="left:17.00px;top:276px;font-size:12px;line-height:16px;transform:scaleX(0.8750);">(C1) Load Cycle Count</div>
<div class="t" style="left:207.20px;top:276px;font-size:12px;line-height:16px;transform:scaleX(0.8750);">97</div>
<div class="t" style="left:262.30px;top:276px;font-size:12px;line-height:16px;transform:scaleX(0.8750);">97</div>
<div class="t" style="left:317.60px;top:276px;font-size:12px;line-height:16px;transform:scaleX(0.8750);">0</div>
<div class="t" style="left:387.00px;top:276px;font-size:12px;line-height:16px;transform:scaleX(0.8750);">6857</div>
<div class="t" style="left:446.80px;top:276px;font-size:12px;line-height:16px;transform:scaleX(0.8750);">Ok</div>
<div class="t" style="left:17.00px;top:293px;font-size:12px;line-height:16px;transform:scaleX(0.8750);">(C2) Temperature</div>
<div class="t" style="left:207.20px;top:293px;font-size:12px;line-height:16px;transform:scaleX(0.8750);">26</div>
<div class="t" style="left:262.30px;top:293px;font-size:12px;line-height:16px;transform:scaleX(0.8750);">45</div>
<div class="t" style="left:317.60px;top:293px;font-size:12px;line-height:16px;transform:scaleX(0.8750);">0</div>
<div class="t" style="left:387.00px;top:293px;font-size:12px;line-height:16px;transform:scaleX(0.8750);">26</div>
<div class="t" style="left:446.80px;top:293px;font-size:12px;line-height:16px;transform:scaleX(0.8750);">Ok</div>
<div class="t" style="left:17.00px;top:310px;font-size:12px;line-height:16px;transform:scaleX(0.8750);">(C5) Current Pending Sector</div>
<div class="t" style="left:207.20px;top:310px;font-size:12px;line-height:16px;transform:scaleX(0.8750);">100</div>
<div class="t" style="left:262.30px;top:310px;font-size:12px;line-height:16px;transform:scaleX(0.8750);">100</div>
<div class="t" style="left:317.60px;top:310px;font-size:12px;line-height:16px;transform:scaleX(0.8750);">0</div>
<div class="t" style="left:387.00px;top:310px;font-size:12px;line-height:16px;transform:scaleX(0.8750);">0</div>
<div class="t" style="left:446.80px;top:310px;font-size:12px;line-height:16px;transform:scaleX(0.8750);">Ok</div>
<div class="t" style="left:17.00px;top:327px;font-size:12px;line-height:16px;transform:scaleX(0.8750);">(C6) Offline Uncorrectable</div>
<div class="t" style="left:207.20px;top:327px;font-size:12px;line-height:16px;transform:scaleX(0.8750);">100</div>
<div class="t" style="left:262.30px;top:327px;font-size:12px;line-height:16px;transform:scaleX(0.8750);">100</div>
<div class="t" style="left:317.60px;top:327px;font-size:12px;line-height:16px;transform:scaleX(0.8750);">0</div>
<div class="t" style="left:387.00px;top:327px;font-size:12px;line-height:16px;transform:scaleX(0.8750);">0</div>
<div class="t" style="left:446.80px;top:327px;font-size:12px;line-height:16px;transform:scaleX(0.8750);">Ok</div>
<div class="t" style="left:17.00px;top:344px;font-size:12px;line-height:16px;transform:scaleX(0.8750);">(C7) Ultra DMA CRC Error Count</div>
<div class="t" style="left:207.20px;top:344px;font-size:12px;line-height:16px;transform:scaleX(0.8750);">200</div>
<div class="t" style="left:262.30px;top:344px;font-size:12px;line-height:16px;transform:scaleX(0.8750);">200</div>
<div class="t" style="left:317.60px;top:344px;font-size:12px;line-height:16px;transform:scaleX(0.8750);">0</div>
<div class="t" style="left:387.00px;top:344px;font-size:12px;line-height:16px;transform:scaleX(0.8750);">0</div>
<div class="t" style="left:446.80px;top:344px;font-size:12px;line-height:16px;transform:scaleX(0.8750);">Ok</div>
<div class="t" style="left:17.00px;top:361px;font-size:12px;line-height:16px;transform:scaleX(0.8750);">(F0) Head Flying Hours</div>
<div class="t" style="left:207.20px;top:361px;font-size:12px;line-height:16px;transform:scaleX(0.8750);">100</div>
<div class="t" style="left:262.30px;top:361px;font-size:12px;line-height:16px;transform:scaleX(0.8750);">253</div>
<div class="t" style="left:317.60px;top:361px;font-size:12px;line-height:16px;transform:scaleX(0.8750);">0</div>
<div class="t" style="left:387.00px;top:361px;font-size:12px;line-height:16px;transform:scaleX(0.8750);">9737</div>
<div class="t" style="left:446.80px;top:361px;font-size:12px;line-height:16px;transform:scaleX(0.8750);">Ok</div>
<div class="t" style="left:17.00px;top:378px;font-size:12px;line-height:16px;transform:scaleX(0.8750);">(F1) (unknown attribute)</div>
<div class="t" style="left:207.20px;top:378px;font-size:12px;line-height:16px;transform:scaleX(0.8750);">100</div>
<div class="t" style="left:262.30px;top:378px;font-size:12px;line-height:16px;transform:scaleX(0.8750);">253</div>
<div class="t" style="left:317.60px;top:378px;font-size:12px;line-height:16px;transform:scaleX(0.8750);">0</div>
<div class="t" style="left:387.00px;top:378px;font-size:12px;line-height:16px;transform:scaleX(0.8750);">168362...</div>
<div class="t" style="left:446.80px;top:378px;font-size:12px;line-height:16px;transform:scaleX(0.8750);">Ok</div>
<div class="t" style="left:17.00px;top:395px;font-size:12px;line-height:16px;transform:scaleX(0.8750);">(F2) (unknown attribute)</div>
<div class="t" style="left:207.20px;top:395px;font-size:12px;line-height:16px;transform:scaleX(0.8750);">100</div>
<div class="t" style="left:262.30px;top:395px;font-size:12px;line-height:16px;transform:scaleX(0.8750);">253</div>
<div class="t" style="left:317.60px;top:395px;font-size:12px;line-height:16px;transform:scaleX(0.8750);">0</div>
<div class="t" style="left:387.00px;top:395px;font-size:12px;line-height:16px;transform:scaleX(0.8750);">588419...</div>
<div class="t" style="left:446.80px;top:395px;font-size:12px;line-height:16px;transform:scaleX(0.8750);">Ok</div>
<div class="b" style="left:527px;top:98px;width:16px;height:316px;background:#f0f0f0;"></div>
<div class="b" style="left:527px;top:197px;width:15px;height:200px;background:#cdcdcd;"></div>
<svg class="b" style="left:530.6px;top:103px" width="8" height="7" viewBox="0 0 8 7"><path d="M0.9 5.6 L4 2.2 L7.1 5.6" fill="none" stroke="#505050" stroke-width="2.3"/></svg>
<svg class="b" style="left:530.6px;top:402px" width="8" height="7" viewBox="0 0 8 7"><path d="M0.9 1.4 L4 4.8 L7.1 1.4" fill="none" stroke="#505050" stroke-width="2.3"/></svg>
<div class="t" style="left:14.30px;top:423px;font-size:12px;line-height:16px;transform:scaleX(0.8765);">Power On Time:</div>
<div class="t" style="left:119.50px;top:422px;font-size:13px;line-height:17px;font-weight:bold;transform:scaleX(0.9508);">9681</div>
<div class="t" style="left:297.00px;top:423px;font-size:12px;line-height:16px;transform:scaleX(0.8955);">Health Status:</div>
<div class="t" style="left:422.00px;top:422px;font-size:13px;line-height:17px;font-weight:bold;color:#00c000;transform:scaleX(0.9226);">Ok</div>
</div>
<div class="w" style="left:4px;top:460px">
<svg class="b" style="left:-2.9px;top:4.1px" width="16.2" height="16.2" viewBox="0 0 18 18"><g transform="rotate(-42 8.6 8.6)"><rect x="0.6" y="3.6" width="16" height="10.4" rx="1.6" fill="#3f566c"/><rect x="0.9" y="3.3" width="15.4" height="9.6" rx="1.5" fill="#6d8599"/><rect x="1.6" y="5" width="2.4" height="5.6" rx="1" fill="#c3ccd4"/><rect x="4.2" y="9.4" width="4.2" height="2.6" fill="#4c5f70"/></g><circle cx="10" cy="6.9" r="4.5" fill="#c4a994"/><ellipse cx="9.4" cy="9.6" rx="2.4" ry="1.3" fill="#e3c0a6"/><circle cx="9.9" cy="6.6" r="1.1" fill="#b39c8b"/></svg>
<div class="t" style="left:18.00px;top:4px;font-size:12px;line-height:16px;color:#999;transform:scaleX(0.9762);">HD Tune 2.55 - Hard Disk Utility</div>
<div class="b" style="left:439px;top:12px;width:10px;height:1px;background:#999;"></div>
<div class="b" style="left:484px;top:7px;width:10px;height:10px;border:1px solid #dadada;box-sizing:border-box;"></div>
<svg class="b" style="left:529px;top:6px" width="12" height="12" viewBox="0 0 12 12"><path d="M1 1 L11 11 M11 1 L1 11" stroke="#999" stroke-width="1.1"/></svg>
<div class="b" style="left:5px;top:34px;width:543px;height:35px;border:1px solid #dcdcdc;box-sizing:border-box;"></div>
<div class="b" style="left:12px;top:41px;width:236px;height:21px;background:#e1e1e1;border:1px solid #adadad;box-sizing:border-box;"></div>
<div class="t" style="left:16.00px;top:45px;font-size:12px;line-height:16px;transform:scaleX(0.8857);">ST1000DM003-1CH162 (1000 GB)</div>
<svg class="b" style="left:235px;top:48.5px" width="11" height="7" viewBox="0 0 11 7"><path d="M0.5 0.5 L5.5 5.5 L10.5 0.5" fill="none" stroke="#404040" stroke-width="1.1"/></svg>
<svg class="b" style="left:270px;top:43px" width="10" height="17" viewBox="0 0 10 17"><path d="M3 1.5 Q3 0.6 4.5 0.6 L5.5 0.6 Q7 0.6 7 1.5 L7 10 Q9 11 9 13 Q9 16.3 5 16.3 Q1 16.3 1 13 Q1 11 3 10 Z" fill="#fff" stroke="#000" stroke-width="1.1"/><rect x="4" y="4" width="2.6" height="8" fill="#f00"/><circle cx="5" cy="13" r="2.9" fill="#f00"/><rect x="3.6" y="12" width="1.2" height="1.2" fill="#fff"/><rect x="6.6" y="1" width="1" height="10" fill="#000"/></svg>
<div class="t" style="left:284.40px;top:44px;font-size:13px;line-height:17px;font-weight:bold;transform:scaleX(0.9492);">26 °C</div>
<div class="b" style="left:374px;top:40px;width:1px;height:22px;background:#a0a0a0;"></div>
<div class="b" style="left:375px;top:40px;width:1px;height:22px;background:#fff;"></div>
<svg class="b" style="left:382px;top:44px" width="16" height="16" viewBox="0 0 16 16" shape-rendering="crispEdges"><rect x="0.5" y="0.5" width="7" height="12" fill="#fff" stroke="#000"/><rect x="2" y="4" width="4" height="1" fill="#00f"/><rect x="2" y="6" width="4" height="1" fill="#00f"/><rect x="2" y="8" width="4" height="1" fill="#00f"/><rect x="8" y="14" width="8" height="1" fill="#000"/><rect x="15" y="5" width="1" height="10" fill="#000"/><polygon points="6.5,2.5 12.5,2.5 14.5,4.5 14.5,14.5 6.5,14.5" fill="#fff" stroke="#000"/><rect x="8" y="6" width="3" height="1" fill="#00f"/><rect x="8" y="8" width="5" height="1" fill="#00f"/><rect x="8" y="10" width="5" height="1" fill="#00f"/><rect x="11" y="12" width="3" height="2" fill="#c0c0c0"/></svg>
<svg class="b" style="left:408px;top:44px" width="16" height="16" viewBox="0 0 16 16" shape-rendering="crispEdges"><rect x="0.5" y="0.5" width="7" height="12" fill="#fff" stroke="#000"/><rect x="2" y="4" width="4" height="1" fill="#00f"/><rect x="2" y="5" width="4" height="5" fill="#0c0"/><rect x="4" y="6" width="2" height="3" fill="#ff0"/><rect x="4" y="6" width="1" height="1" fill="#f00"/><rect x="8" y="14" width="8" height="1" fill="#000"/><rect x="15" y="5" width="1" height="10" fill="#000"/><polygon points="6.5,2.5 12.5,2.5 14.5,4.5 14.5,14.5 6.5,14.5" fill="#fff" stroke="#000"/><rect x="8" y="6" width="4" height="1" fill="#00f"/><rect x="8" y="7" width="4" height="5" fill="#0c0"/><rect x="9" y="8" width="3" height="3" fill="#ff0"/><rect x="10" y="8" width="1" height="1" fill="#f00"/><rect x="12" y="7" width="2" height="7" fill="#c0c0c0"/></svg>
<svg class="b" style="left:435px;top:44px" width="16" height="16" viewBox="0 0 16 16"><path d="M0 0 H15 V15 H2 L0 13 Z" fill="#000"/><path d="M1 1 H14 V14 H2.4 L1 12.6 Z" fill="#0000ff"/><rect x="1" y="1" width="1.6" height="11.5" fill="#00ffff"/><rect x="3.6" y="0.8" width="8.6" height="6.8" fill="#d6d6d6"/><rect x="4.6" y="2.2" width="6.6" height="0.9" fill="#8c8c8c"/><rect x="4.6" y="4" width="6.6" height="0.9" fill="#8c8c8c"/><rect x="4.6" y="5.8" width="6.6" height="0.9" fill="#8c8c8c"/><rect x="3.6" y="10.4" width="9" height="3.6" fill="#6e6e6e"/><rect x="4" y="11.2" width="4.6" height="2.4" fill="#9a9a9a"/><rect x="10" y="11" width="1.9" height="2.8" fill="#f4f4f4"/><rect x="15" y="1" width="1" height="15" fill="#000" opacity="0.55"/><rect x="3" y="15" width="13" height="1" fill="#000" opacity="0.55"/></svg>
<svg class="b" style="left:462px;top:44px" width="17" height="17" viewBox="0 0 17 17"><polygon points="5.20,2.30 6.70,3.29 8.67,3.24 9.01,4.70 10.52,5.61 9.53,6.86 9.88,8.30 8.03,8.75 7.05,10.06 5.20,9.50 3.35,10.06 2.37,8.75 0.52,8.30 0.87,6.86 -0.12,5.61 1.39,4.70 1.73,3.24 3.70,3.29" fill="#000"/><polygon points="5.40,2.10 6.53,3.24 8.42,2.87 8.26,4.25 10.03,4.83 8.65,5.80 9.47,7.05 7.52,7.16 7.01,8.50 5.40,7.70 3.79,8.50 3.28,7.16 1.33,7.05 2.15,5.80 0.77,4.83 2.54,4.25 2.38,2.87 4.27,3.24" fill="#ffff00"/><rect x="0.66" y="3.10" width="1" height="1" fill="#000"/><rect x="2.83" y="1.64" width="1" height="1" fill="#000"/><rect x="6.97" y="1.64" width="1" height="1" fill="#000"/><rect x="9.14" y="3.10" width="1" height="1" fill="#000"/><path d="M4.30 1.20 l1.1 -1.2 l1.1 1.2 v5.2 h-2.2 z" fill="#c8c8d4" stroke="#000" stroke-width="0.7"/><rect x="4.80" y="1.40" width="0.8" height="5" fill="#fff"/><polygon points="10.30,7.30 11.80,8.29 13.77,8.24 14.11,9.70 15.62,10.61 14.63,11.86 14.98,13.30 13.13,13.75 12.15,15.06 10.30,14.50 8.45,15.06 7.47,13.75 5.62,13.30 5.97,11.86 4.98,10.61 6.49,9.70 6.83,8.24 8.80,8.29" fill="#000"/><polygon points="10.50,7.10 11.63,8.24 13.52,7.87 13.36,9.25 15.13,9.83 13.75,10.80 14.57,12.05 12.62,12.16 12.11,13.50 10.50,12.70 8.89,13.50 8.38,12.16 6.43,12.05 7.25,10.80 5.87,9.83 7.64,9.25 7.48,7.87 9.37,8.24" fill="#ffff00"/><rect x="5.76" y="8.10" width="1" height="1" fill="#000"/><rect x="7.93" y="6.64" width="1" height="1" fill="#000"/><rect x="12.07" y="6.64" width="1" height="1" fill="#000"/><rect x="14.24" y="8.10" width="1" height="1" fill="#000"/><path d="M9.40 6.20 l1.1 -1.2 l1.1 1.2 v5.2 h-2.2 z" fill="#c8c8d4" stroke="#000" stroke-width="0.7"/><rect x="9.90" y="6.40" width="0.8" height="5" fill="#fff"/></svg>
<div class="b" style="left:486px;top:40px;width:1px;height:22px;background:#a0a0a0;"></div>
<div class="b" style="left:487px;top:40px;width:1px;height:22px;background:#fff;"></div>
<svg class="b" style="left:500.5px;top:45.5px" width="12.2" height="11.3" viewBox="0 0 13 12"><path d="M2 1.8 L10.6 9.8 M10.6 1.8 L2 9.8" stroke="#000" stroke-width="3.9" stroke-linecap="square"/><path d="M2 1.8 L10.6 9.8 M10.6 1.8 L2 9.8" stroke="#0000ff" stroke-width="2" stroke-linecap="square"/><path d="M1.7 1.4 L5.2 4.7 M10 1.4 L7.6 3.7" stroke="#00e5ff" stroke-width="0.9"/></svg>
<div class="t" style="left:517.30px;top:44px;font-size:12px;line-height:16px;transform:scaleX(0.7848);">Exit</div>
<div class="b" style="left:525px;top:57px;width:5px;height:1px;background:#000;"></div>
<div class="b" style="left:5px;top:94px;width:541px;height:361px;background:#fff;border:1px solid #dcdcdc;box-sizing:border-box;"></div>
<div class="b" style="left:7.5px;top:77px;width:84px;height:18px;background:#f0f0f0;border:1px solid #dcdcdc;box-sizing:border-box;border-bottom:none;"></div>
<svg class="b" style="left:15.1px;top:79px" width="7.2" height="12.8" viewBox="0 0 8 14"><path d="M4 0.6 Q7 0.6 6.6 4 L5.4 8.6 L2.6 8.6 L1.4 4 Q1 0.6 4 0.6 Z" fill="#ff0" stroke="#000" stroke-width="1.1"/><circle cx="4" cy="11.3" r="1.9" fill="#ff0" stroke="#000" stroke-width="1.1"/><rect x="3" y="2" width="1" height="3" fill="#fff"/></svg>
<div class="t" style="left:31.30px;top:78px;font-size:12px;line-height:16px;transform:scaleX(0.8667);">Benchmark</div>
<div class="b" style="left:90.5px;top:77px;width:49px;height:18px;background:#f0f0f0;border:1px solid #dcdcdc;box-sizing:border-box;border-bottom:none;"></div>
<svg class="b" style="left:99.6px;top:79px" width="8.2" height="13.6" viewBox="0 0 9 15"><circle cx="4.8" cy="2.7" r="2.3" fill="#0cf" stroke="#000" stroke-width="1"/><path d="M1.5 6.5 L6.5 6.5 L6.5 12.5 L8 12.5 L8 14.4 L1 14.4 L1 12.5 L2.8 12.5 L2.8 8.3 L1.5 8.3 Z" fill="#00f" stroke="#000" stroke-width="1"/></svg>
<div class="t" style="left:114.50px;top:78px;font-size:12px;line-height:16px;transform:scaleX(0.8743);">Info</div>
<div class="b" style="left:138.5px;top:77px;width:61.5px;height:18px;background:#f0f0f0;border:1px solid #dcdcdc;box-sizing:border-box;border-bottom:none;"></div>
<svg class="b" style="left:145px;top:79px" width="12" height="13" viewBox="0 0 12 13" shape-rendering="crispEdges"><path d="M4.5 0.5 H7.5 V4.5 H11.5 V8.5 H7.5 V12.5 H4.5 V8.5 H0.5 V4.5 H4.5 Z" fill="#f00" stroke="#000" stroke-width="1"/><rect x="5" y="1" width="1" height="4" fill="#fff"/><rect x="1" y="5" width="4" height="1" fill="#fff"/></svg>
<div class="t" style="left:163.30px;top:78px;font-size:12px;line-height:16px;transform:scaleX(0.8649);">Health</div>
<div class="b" style="left:198px;top:74px;width:84px;height:21px;background:#fff;border:1px solid #dcdcdc;box-sizing:border-box;border-bottom:none;"></div>
<svg class="b" style="left:205.5px;top:76.5px" width="13" height="13" viewBox="0 0 13 13"><path d="M6.5 6.5 L11.5 11.5" stroke="#000" stroke-width="3.2" stroke-linecap="round"/><path d="M7 7 L11.3 11.3" stroke="#00c" stroke-width="1.3" stroke-linecap="round"/><circle cx="4.4" cy="4.4" r="3.6" fill="#0e0" stroke="#000" stroke-width="1.1"/><rect x="3" y="2.6" width="1.6" height="1.6" fill="#cfc"/></svg>
<div class="t" style="left:224.20px;top:76px;font-size:12px;line-height:16px;transform:scaleX(0.8596);">Error Scan</div>
<svg class="b" style="left:14px;top:116px" width="401" height="301" viewBox="0 0 401 301" shape-rendering="crispEdges"><rect width="401" height="301" fill="#00ff00"/><path d="M0.5 0V301M8.5 0V301M16.5 0V301M24.5 0V301M32.5 0V301M40.5 0V301M48.5 0V301M56.5 0V301M64.5 0V301M72.5 0V301M80.5 0V301M88.5 0V301M96.5 0V301M104.5 0V301M112.5 0V301M120.5 0V301M128.5 0V301M136.5 0V301M144.5 0V301M152.5 0V301M160.5 0V301M168.5 0V301M176.5 0V301M184.5 0V301M192.5 0V301M200.5 0V301M208.5 0V301M216.5 0V301M224.5 0V301M232.5 0V301M240.5 0V301M248.5 0V301M256.5 0V301M264.5 0V301M272.5 0V301M280.5 0V301M288.5 0V301M296.5 0V301M304.5 0V301M312.5 0V301M320.5 0V301M328.5 0V301M336.5 0V301M344.5 0V301M352.5 0V301M360.5 0V301M368.5 0V301M376.5 0V301M384.5 0V301M392.5 0V301M400.5 0V301M0 0.5H401M0 6.5H401M0 12.5H401M0 18.5H401M0 24.5H401M0 30.5H401M0 36.5H401M0 42.5H401M0 48.5H401M0 54.5H401M0 60.5H401M0 66.5H401M0 72.5H401M0 78.5H401M0 84.5H401M0 90.5H401M0 96.5H401M0 102.5H401M0 108.5H401M0 114.5H401M0 120.5H401M0 126.5H401M0 132.5H401M0 138.5H401M0 144.5H401M0 150.5H401M0 156.5H401M0 162.5H401M0 168.5H401M0 174.5H401M0 180.5H401M0 186.5H401M0 192.5H401M0 198.5H401M0 204.5H401M0 210.5H401M0 216.5H401M0 222.5H401M0 228.5H401M0 234.5H401M0 240.5H401M0 246.5H401M0 252.5H401M0 258.5H401M0 264.5H401M0 270.5H401M0 276.5H401M0 282.5H401M0 288.5H401M0 294.5H401M0 300.5H401" stroke="#000" stroke-width="1" fill="none"/></svg>
<div class="b" style="left:450px;top:107px;width:73px;height:21px;background:#e1e1e1;border:1px solid #adadad;box-sizing:border-box;"></div>
<div class="t" style="left:475.60px;top:110px;font-size:12px;line-height:16px;transform:scaleX(0.8208);">Start</div>
<div class="b" style="left:446px;top:136.5px;width:13px;height:13px;background:#fff;border:1px solid #333;box-sizing:border-box;"></div>
<div class="t" style="left:461.60px;top:135px;font-size:12px;line-height:16px;transform:scaleX(0.9061);">Quick Scan</div>
<div class="b" style="left:431px;top:159px;width:111px;height:86px;border:1px solid #dcdcdc;box-sizing:border-box;"></div>
<div class="b" style="left:437.5px;top:152px;width:40px;height:16px;background:#fff;"></div>
<div class="t" style="left:440.00px;top:152px;font-size:12px;line-height:16px;transform:scaleX(0.8741);">Legend</div>
<div class="b" style="left:446px;top:174px;width:8px;height:8px;background:#808080;border:1px solid #000;box-sizing:border-box;"></div>
<div class="t" style="left:458.50px;top:171px;font-size:12px;line-height:16px;transform:scaleX(0.8801);">= 381 MB</div>
<div class="b" style="left:446px;top:200px;width:8px;height:8px;background:#00ff00;border:1px solid #000;box-sizing:border-box;"></div>
<div class="t" style="left:455.00px;top:196px;font-size:12px;line-height:16px;transform:scaleX(0.8478);">Ok</div>
<div class="b" style="left:446px;top:226px;width:8px;height:8px;background:#ff0000;border:1px solid #000;box-sizing:border-box;"></div>
<div class="t" style="left:456.40px;top:222px;font-size:12px;line-height:16px;transform:scaleX(0.8745);">Damaged</div>
<div class="b" style="left:431px;top:250px;width:111px;height:185px;border:1px solid #dcdcdc;box-sizing:border-box;"></div>
<div class="t" style="left:446.20px;top:261px;font-size:12px;line-height:16px;transform:scaleX(0.8852);">Damaged Blocks</div>
<div class="t" style="left:498.20px;top:279px;font-size:13px;line-height:17px;font-weight:bold;transform:scaleX(0.9265);">0.0 %</div>
<div class="t" style="left:446.20px;top:305px;font-size:12px;line-height:16px;transform:scaleX(0.8890);">Scanning Speed</div>
<div class="t" style="left:449.00px;top:323px;font-size:13px;line-height:17px;font-weight:bold;transform:scaleX(0.9796);">220.0 MB/sec</div>
<div class="t" style="left:446.20px;top:349px;font-size:12px;line-height:16px;transform:scaleX(0.8386);">Position</div>
<div class="t" style="left:465.70px;top:367px;font-size:13px;line-height:17px;font-weight:bold;transform:scaleX(0.9418);">953488 MB</div>
<div class="t" style="left:446.20px;top:392px;font-size:12px;line-height:16px;transform:scaleX(0.8597);">Elapsed Time</div>
<div class="t" style="left:491.20px;top:411px;font-size:13px;line-height:17px;font-weight:bold;transform:scaleX(0.9337);">108:01</div>
</div>
</body></html>
